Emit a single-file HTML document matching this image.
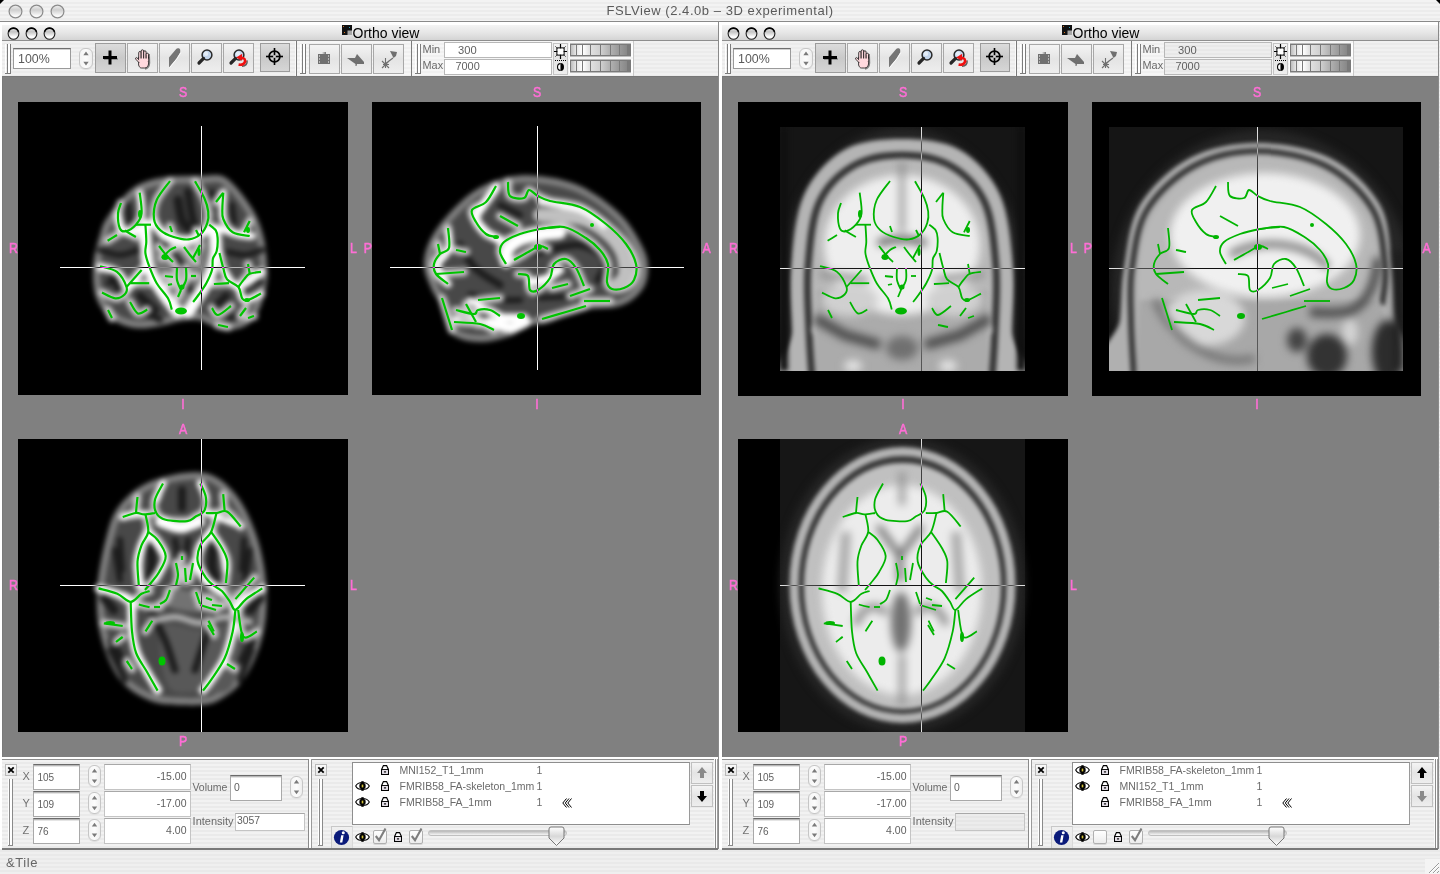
<!DOCTYPE html><html><head><meta charset="utf-8"><style>
*{margin:0;padding:0;box-sizing:border-box}
html,body{width:1440px;height:874px;overflow:hidden}
body{position:relative;font-family:"Liberation Sans",sans-serif;background:repeating-linear-gradient(180deg,#efefef 0 2px,#e9e9e9 2px 4px);}
div,span,svg{position:absolute}
.stripe{background:repeating-linear-gradient(180deg,#f1f1f1 0 2px,#ebebeb 2px 4px)}
.gray{background:#808080}
.blk{background:#000;overflow:hidden}
.lbl{color:#ff73d6;font-size:12px;line-height:12px;}
.t{white-space:nowrap;font-size:11px;line-height:13px;color:#5f5f5f}
.fld{background:#fff;border:1px solid #9a9a9a;border-top-color:#6f6f6f;box-shadow:inset 0 1px 0 #d0d0d0}
.btn{border:1px solid #a8a8a8;background:linear-gradient(#f4f4f4,#e4e4e4 50%,#eeeeee)}
.btnp{border:1px solid #9c9c9c;background:linear-gradient(#dcdcdc,#c9c9c9 50%,#d6d6d6)}
.tl{border-radius:50%;background:radial-gradient(circle at 50% 75%,#ffffff 0,#f2f2f2 30%,#c9c9c9 70%,#9a9a9a 100%);border:1px solid #8b8b8b}
</style></head><body><div style="left:0;top:0;width:1440px;height:21px;background:repeating-linear-gradient(180deg,#f3f3f3 0 2px,#ececec 2px 4px)"></div>
<div style="left:0;top:21px;width:1440px;height:1px;background:#8a8a8a"></div>
<svg style="left:7.5px;top:3.5px;" width="15" height="15" viewBox="0 0 15 15"><defs><linearGradient id="mtl" x1="0" y1="0" x2="0" y2="1"><stop offset="0" stop-color="#f0f0f0"/><stop offset=".38" stop-color="#cfcfcf"/><stop offset=".85" stop-color="#fbfbfb"/><stop offset="1" stop-color="#f2f2f2"/></linearGradient></defs><circle cx="7.5" cy="7.5" r="6.4" fill="url(#mtl)" stroke="#8a8a8a" stroke-width="1.2"/></svg>
<svg style="left:28.5px;top:3.5px;" width="15" height="15" viewBox="0 0 15 15"><defs><linearGradient id="mtl" x1="0" y1="0" x2="0" y2="1"><stop offset="0" stop-color="#f0f0f0"/><stop offset=".38" stop-color="#cfcfcf"/><stop offset=".85" stop-color="#fbfbfb"/><stop offset="1" stop-color="#f2f2f2"/></linearGradient></defs><circle cx="7.5" cy="7.5" r="6.4" fill="url(#mtl)" stroke="#8a8a8a" stroke-width="1.2"/></svg>
<svg style="left:49.5px;top:3.5px;" width="15" height="15" viewBox="0 0 15 15"><defs><linearGradient id="mtl" x1="0" y1="0" x2="0" y2="1"><stop offset="0" stop-color="#f0f0f0"/><stop offset=".38" stop-color="#cfcfcf"/><stop offset=".85" stop-color="#fbfbfb"/><stop offset="1" stop-color="#f2f2f2"/></linearGradient></defs><circle cx="7.5" cy="7.5" r="6.4" fill="url(#mtl)" stroke="#8a8a8a" stroke-width="1.2"/></svg>
<svg style="left:0;top:0" width="5" height="5"><path d="M0 0 H4 L0 4 Z" fill="#000"/></svg>
<svg style="left:1435px;top:0" width="5" height="5"><path d="M5 0 H1 L5 4 Z" fill="#000"/></svg>
<div class="t" style="left:520.0px;width:400px;text-align:center;top:2.50px;font-size:13px;line-height:16px;color:#5a5a5a;font-weight:normal;letter-spacing:0.55px">FSLView (2.4.0b – 3D experimental)</div>
<div class="t" style="left:6px;top:854.50px;font-size:13px;line-height:16px;color:#666;font-weight:normal;letter-spacing:0.6px">&amp;Tile</div>
<svg style="left:1425px;top:859px;" width="15" height="15" viewBox="0 0 15 15"><rect x="0" y="0" width="15" height="15" fill="#f4f4f4"/><path d="M4 14 L14 4 M8 14 L14 8 M12 14 L14 12" stroke="#9a9a9a" stroke-width="1"/><path d="M5 14 L14 5 M9 14 L14 9" stroke="#fff" stroke-width="1"/></svg>
<div style="left:0px;top:22px;width:2px;height:827px;background:#fff"></div>
<div style="left:719px;top:22px;width:3px;height:827px;background:#fff"></div>
<div style="left:2px;top:22px;width:716px;height:3px;background:#fff"></div>
<div style="left:2px;top:25px;width:716px;height:15px;background:linear-gradient(#f4f4f4,#e6e6e6 50%,#d4d4d4)"></div>
<svg style="left:7.0px;top:26.5px;" width="13" height="13" viewBox="0 0 13 13"><defs><linearGradient id="stl" x1="0" y1="0" x2="0" y2="1"><stop offset="0" stop-color="#e8e8e8"/><stop offset=".35" stop-color="#c4c4c4"/><stop offset=".8" stop-color="#ffffff"/><stop offset="1" stop-color="#f4f4f4"/></linearGradient></defs><ellipse cx="6.5" cy="6.5" rx="5.4" ry="5.7" fill="url(#stl)" stroke="#1e1e1e" stroke-width="1.1"/><path d="M1.6 5 A5.2 5.6 0 0 1 11.4 5" fill="none" stroke="#000" stroke-width="1.3"/></svg>
<svg style="left:25.0px;top:26.5px;" width="13" height="13" viewBox="0 0 13 13"><defs><linearGradient id="stl" x1="0" y1="0" x2="0" y2="1"><stop offset="0" stop-color="#e8e8e8"/><stop offset=".35" stop-color="#c4c4c4"/><stop offset=".8" stop-color="#ffffff"/><stop offset="1" stop-color="#f4f4f4"/></linearGradient></defs><ellipse cx="6.5" cy="6.5" rx="5.4" ry="5.7" fill="url(#stl)" stroke="#1e1e1e" stroke-width="1.1"/><path d="M1.6 5 A5.2 5.6 0 0 1 11.4 5" fill="none" stroke="#000" stroke-width="1.3"/></svg>
<svg style="left:43.0px;top:26.5px;" width="13" height="13" viewBox="0 0 13 13"><defs><linearGradient id="stl" x1="0" y1="0" x2="0" y2="1"><stop offset="0" stop-color="#e8e8e8"/><stop offset=".35" stop-color="#c4c4c4"/><stop offset=".8" stop-color="#ffffff"/><stop offset="1" stop-color="#f4f4f4"/></linearGradient></defs><ellipse cx="6.5" cy="6.5" rx="5.4" ry="5.7" fill="url(#stl)" stroke="#1e1e1e" stroke-width="1.1"/><path d="M1.6 5 A5.2 5.6 0 0 1 11.4 5" fill="none" stroke="#000" stroke-width="1.3"/></svg>
<svg style="left:342px;top:25px;" width="10" height="10" viewBox="0 0 10 10"><rect x="0" y="0" width="10" height="10" fill="#111"/><rect x="5.5" y="5.5" width="4.5" height="4.5" fill="#a8a8a8"/><rect x="1" y="1" width="1" height="1" fill="#d07020"/><rect x="7" y="2" width="1" height="1" fill="#2aa0c0"/><rect x="2" y="7" width="1" height="1" fill="#d07020"/></svg>
<div class="t" style="left:352.5px;top:24.95px;font-size:14px;line-height:17px;color:#000;font-weight:normal;">Ortho view</div>
<div style="left:2px;top:40px;width:716px;height:1px;background:#8e8e8e"></div>
<div class="stripe" style="left:2px;top:41px;width:716px;height:35px;"></div>
<div class="gray" style="left:2px;top:76px;width:716px;height:681px;"></div>
<div style="left:2px;top:76px;width:716px;height:1px;background:#777"></div>
<div style="left:2px;top:76px;width:1px;height:681px;background:#7a7a7a"></div>
<div style="left:2px;top:757px;width:716px;height:2px;background:#fff"></div>
<div style="left:2px;top:759px;width:716px;height:1px;background:#8e8e8e"></div>
<div class="stripe" style="left:2px;top:760px;width:716px;height:88px;"></div>
<div style="left:2px;top:848px;width:716px;height:2px;background:#7a7a7a"></div>
<svg style="left:5px;top:44px;" width="7" height="31" viewBox="0 0 7 31"><rect x="0" y="0" width="1" height="30" fill="#fff"/><rect x="2" y="0" width="1" height="30" fill="#7c7c7c"/><rect x="3" y="0" width="2" height="30" fill="#fff"/><rect x="5" y="0" width="1" height="30" fill="#7c7c7c"/><rect x="0" y="29" width="6" height="1" fill="#7c7c7c"/></svg>
<div class="fld" style="left:13px;top:48px;width:58px;height:21px"></div>
<div class="t" style="left:18px;top:51.70px;font-size:12.4px;line-height:15px;color:#5a5a5a;font-weight:normal;">100%</div>
<div style="left:79px;top:48px;width:14px;height:21px;border:1px solid #c6c6c6;border-radius:6px;background:linear-gradient(90deg,#f4f4f4,#fcfcfc 50%,#eeeeee);box-shadow:0 1px 0 #e0e0e0"></div>
<svg style="left:79px;top:48px;" width="14" height="21" viewBox="0 0 14 21"><path d="M4.3 7.140000000000001 L7.0 3.4400000000000004 L9.7 7.140000000000001 Z" fill="#7a7a7a"/><path d="M4.3 13.860000000000001 L7.0 17.560000000000002 L9.7 13.860000000000001 Z" fill="#7a7a7a"/></svg>
<div class="btnp" style="left:95px;top:43px;width:31px;height:30px;"></div>
<svg style="left:95px;top:43px;" width="31" height="30" viewBox="0 0 31 30"><g fill="#000"><rect x="8" y="13" width="14" height="3"/><rect x="13.5" y="7.5" width="3" height="14"/></g><g fill="#000" opacity="0.25"><rect x="9" y="15" width="14" height="2"/></g></svg>
<div class="btn" style="left:127px;top:43px;width:31px;height:30px;"></div>
<svg style="left:127px;top:43px;" width="31" height="30" viewBox="0 0 31 30"><g stroke="#111" stroke-width="0.8" fill="#ffd9de"><path d="M11.6 14 L21.6 14 L21.6 20 C21.6 23 20 25 17.5 25 L14.5 25 C13 25 12.4 24 11.6 22 Z"/><path d="M12.3 20 L8.8 16.2 C8.1 15.3 8.8 14.2 9.9 14.8 L12.6 17.2"/><rect x="11.7" y="8.5" width="2.4" height="9" rx="1.2"/><rect x="14.2" y="6.8" width="2.4" height="10.5" rx="1.2"/><rect x="16.7" y="7.8" width="2.4" height="9.5" rx="1.2"/><rect x="19.2" y="10.2" width="2.3" height="7.5" rx="1.15"/></g><rect x="12.1" y="15.5" width="9.1" height="2.5" fill="#ffd9de"/><path d="M22.3 11 L22.6 20 C22.4 23.5 21 25.5 18 26" fill="none" stroke="#000" stroke-width="1.3" opacity=".45"/></svg>
<div class="btn" style="left:159px;top:43px;width:31px;height:30px;"></div>
<svg style="left:159px;top:43px;" width="31" height="30" viewBox="0 0 31 30"><path d="M10 24.5 L10 14.5 L17 6.2 C18 5 20.6 5 21.2 6.8 L21.2 9.5 L17.5 15.5 Z" fill="#767676"/><path d="M10.6 24.8 L17.9 15.8 L21.8 9.6" fill="none" stroke="#fff" stroke-width="0.9"/></svg>
<div class="btn" style="left:191px;top:43px;width:31px;height:30px;"></div>
<svg style="left:191px;top:43px;" width="31" height="30" viewBox="0 0 31 30"><circle cx="16" cy="12" r="4.9" fill="#c4d6ec" stroke="#2a2a2a" stroke-width="1.5"/><circle cx="15" cy="10.8" r="2.2" fill="#eef4fb" opacity=".8"/><path d="M12.6 15.4 L8 20" stroke="#262626" stroke-width="3.2" stroke-linecap="round"/></svg>
<div class="btn" style="left:223px;top:43px;width:31px;height:30px;"></div>
<svg style="left:223px;top:43px;" width="31" height="30" viewBox="0 0 31 30"><circle cx="16" cy="12" r="4.9" fill="#c4d6ec" stroke="#2a2a2a" stroke-width="1.5"/><circle cx="15" cy="10.8" r="2.2" fill="#eef4fb" opacity=".8"/><path d="M12.6 15.4 L8 20" stroke="#262626" stroke-width="3.2" stroke-linecap="round"/><path d="M19 23.3 C22.5 23 24.6 21 24 17.5" fill="none" stroke="#333" stroke-width="1.6" opacity=".75"/><path d="M17 14.8 C21.5 14.2 23 17 21.6 19.6 C20.6 21.5 18.2 22 15.6 21.6" fill="none" stroke="#f01010" stroke-width="2.6"/><path d="M13.2 14.6 L19.2 10.8 L18.8 17.8 Z" fill="#f01010"/></svg>
<div class="btnp" style="left:260px;top:43px;width:30px;height:29px;"></div>
<svg style="left:260px;top:43px;" width="30" height="29" viewBox="0 0 30 29"><circle cx="14.5" cy="13.5" r="5.4" fill="none" stroke="#000" stroke-width="1.7"/><rect x="13.7" y="5" width="1.6" height="17" fill="#000"/><rect x="6" y="12.7" width="17" height="1.6" fill="#000"/><rect x="13.2" y="12.2" width="2.6" height="2.6" fill="#d6d6d6"/></svg>
<div style="left:295px;top:41px;width:1px;height:35px;background:#fafafa"></div>
<div style="left:296px;top:41px;width:1px;height:35px;background:#7a7a7a"></div>
<div style="left:297px;top:41px;width:114px;height:35px;background:repeating-linear-gradient(180deg,#f6f6f6 0 2px,#f0f0f0 2px 4px)"></div>
<svg style="left:300px;top:44px;" width="7" height="31" viewBox="0 0 7 31"><rect x="0" y="0" width="1" height="30" fill="#fff"/><rect x="2" y="0" width="1" height="30" fill="#7c7c7c"/><rect x="3" y="0" width="2" height="30" fill="#fff"/><rect x="5" y="0" width="1" height="30" fill="#7c7c7c"/><rect x="0" y="29" width="6" height="1" fill="#7c7c7c"/></svg>
<div class="btn" style="left:309px;top:44px;width:31px;height:30px;"></div>
<svg style="left:309px;top:44px;" width="31" height="30" viewBox="0 0 31 30"><path d="M9 10 L21 10 L21 20 L9 20 Z" fill="#6f6f6f"/><path d="M13 9 L17 8 L17 10 Z" fill="#6f6f6f"/><g fill="#fff"><rect x="10" y="11.5" width="1" height="1"/><rect x="10" y="14.5" width="1" height="1"/><rect x="10" y="17.5" width="1" height="1"/><rect x="19" y="11.5" width="1" height="1"/><rect x="19" y="14.5" width="1" height="1"/><rect x="19" y="17.5" width="1" height="1"/></g></svg>
<div class="btn" style="left:341px;top:44px;width:31px;height:30px;"></div>
<svg style="left:341px;top:44px;" width="31" height="30" viewBox="0 0 31 30"><path d="M6 14 L14 14 L16 10 L23 18 L23 20 L16 20 L15.5 22 L14.5 22 L14.5 20 Z" fill="#6f6f6f"/></svg>
<div class="btn" style="left:373px;top:44px;width:31px;height:30px;"></div>
<svg style="left:373px;top:44px;" width="31" height="30" viewBox="0 0 31 30"><path d="M9 24 L16 17 M9 17 L16 24 M12.5 14 L12.5 24 M10 20.5 L16 20.5 M12 20 L20 14" stroke="#6f6f6f" stroke-width="1.1"/><path d="M17 7 L24 8 L23 12 L20.5 14 L19 11 Z" fill="#6f6f6f"/></svg>
<div style="left:411px;top:41px;width:1px;height:35px;background:#7a7a7a"></div>
<div style="left:412px;top:41px;width:221px;height:35px;background:repeating-linear-gradient(180deg,#f6f6f6 0 2px,#f0f0f0 2px 4px)"></div>
<div style="left:633px;top:41px;width:1px;height:35px;background:#c8c8c8"></div>
<svg style="left:415px;top:44px;" width="7" height="31" viewBox="0 0 7 31"><rect x="0" y="0" width="1" height="30" fill="#fff"/><rect x="2" y="0" width="1" height="30" fill="#7c7c7c"/><rect x="3" y="0" width="2" height="30" fill="#fff"/><rect x="5" y="0" width="1" height="30" fill="#7c7c7c"/><rect x="0" y="29" width="6" height="1" fill="#7c7c7c"/></svg>
<div class="t" style="left:422.5px;top:42.69px;font-size:11px;line-height:13px;color:#6a6a6a;font-weight:normal;">Min</div>
<div class="t" style="left:422.5px;top:59.22px;font-size:10.9px;line-height:13px;color:#6a6a6a;font-weight:normal;">Max</div>
<div class="fld" style="left:444px;top:42px;width:108px;height:16px;border-color:#b8b8b8;box-shadow:none;"></div>
<div class="fld" style="left:444px;top:59px;width:108px;height:16px;border-color:#b8b8b8;box-shadow:none;"></div>
<div class="t" style="left:458px;top:43.62px;font-size:11.2px;line-height:13px;color:#5f5f5f;font-weight:normal;">300</div>
<div class="t" style="left:455.5px;top:60.22px;font-size:10.9px;line-height:13px;color:#5f5f5f;font-weight:normal;">7000</div>
<div class="btn" style="left:553px;top:43px;width:15px;height:32px;border-color:#c4c4c4"></div>
<svg style="left:553px;top:43px;" width="15" height="32" viewBox="0 0 15 32"><rect x="4" y="5" width="7" height="7" fill="none" stroke="#000" stroke-width="1.2"/><path d="M7.5 1 V16 M1 8.5 H14" stroke="#000" stroke-width="1.2"/><rect x="4.6" y="5.6" width="5.8" height="5.8" fill="#fff"/><path d="M2.5 3.5 l1 1 M12.5 3.5 l-1 1 M2.5 13.5 l1 -1 M12.5 13.5 l-1 -1" stroke="#000" stroke-width="1"/><path d="M2 17.5 H13" stroke="#000" stroke-width="1" stroke-dasharray="1 1"/><path d="M7.5 20 A3.5 4 0 0 0 7.5 28 Z" fill="#000"/><path d="M7.5 20 A3.5 4 0 0 1 7.5 28 Z" fill="#000"/><path d="M7.3 21.2 A2.2 2.8 0 0 0 7.3 26.8 Z" fill="#fff"/></svg>
<svg style="left:569px;top:43px;" width="64" height="14" viewBox="0 0 64 14"><defs><linearGradient id="sg0" x1="0" x2="1"><stop offset="0" stop-color="#bdbdbd"/><stop offset="1" stop-color="#e8e8e8"/></linearGradient><linearGradient id="sg1" x1="0" x2="1"><stop offset="0" stop-color="#e8e8e8"/><stop offset="1" stop-color="#ffffff"/></linearGradient><linearGradient id="sg2" x1="0" x2="1"><stop offset="0" stop-color="#ffffff"/><stop offset="1" stop-color="#e0e0e0"/></linearGradient><linearGradient id="sg3" x1="0" x2="1"><stop offset="0" stop-color="#e0e0e0"/><stop offset="1" stop-color="#cfcfcf"/></linearGradient><linearGradient id="sg4" x1="0" x2="1"><stop offset="0" stop-color="#cfcfcf"/><stop offset="1" stop-color="#b0b0b0"/></linearGradient><linearGradient id="sg5" x1="0" x2="1"><stop offset="0" stop-color="#b0b0b0"/><stop offset="1" stop-color="#999"/></linearGradient><linearGradient id="sg6" x1="0" x2="1"><stop offset="0" stop-color="#999"/><stop offset="1" stop-color="#888"/></linearGradient></defs><rect x="0" y="0" width="64" height="14" fill="#fff"/><rect x="1" y="0.5" width="61" height="13" fill="#7a7a7a"/><rect x="2" y="2" width="5" height="10" fill="url(#sg0)"/><rect x="8" y="2" width="5" height="10" fill="url(#sg1)"/><rect x="14" y="2" width="7" height="10" fill="url(#sg2)"/><rect x="22" y="2" width="9" height="10" fill="url(#sg3)"/><rect x="32" y="2" width="9" height="10" fill="url(#sg4)"/><rect x="42" y="2" width="8" height="10" fill="url(#sg5)"/><rect x="51" y="2" width="7" height="10" fill="url(#sg6)"/><rect x="1" y="12" width="61" height="1" fill="#7a7a7a"/></svg>
<svg style="left:569px;top:59px;" width="64" height="14" viewBox="0 0 64 14"><defs><linearGradient id="sg0" x1="0" x2="1"><stop offset="0" stop-color="#bdbdbd"/><stop offset="1" stop-color="#e8e8e8"/></linearGradient><linearGradient id="sg1" x1="0" x2="1"><stop offset="0" stop-color="#e8e8e8"/><stop offset="1" stop-color="#ffffff"/></linearGradient><linearGradient id="sg2" x1="0" x2="1"><stop offset="0" stop-color="#ffffff"/><stop offset="1" stop-color="#e0e0e0"/></linearGradient><linearGradient id="sg3" x1="0" x2="1"><stop offset="0" stop-color="#e0e0e0"/><stop offset="1" stop-color="#cfcfcf"/></linearGradient><linearGradient id="sg4" x1="0" x2="1"><stop offset="0" stop-color="#cfcfcf"/><stop offset="1" stop-color="#b0b0b0"/></linearGradient><linearGradient id="sg5" x1="0" x2="1"><stop offset="0" stop-color="#b0b0b0"/><stop offset="1" stop-color="#999"/></linearGradient><linearGradient id="sg6" x1="0" x2="1"><stop offset="0" stop-color="#999"/><stop offset="1" stop-color="#888"/></linearGradient></defs><rect x="0" y="0" width="64" height="14" fill="#fff"/><rect x="1" y="0.5" width="61" height="13" fill="#7a7a7a"/><rect x="2" y="2" width="5" height="10" fill="url(#sg0)"/><rect x="8" y="2" width="5" height="10" fill="url(#sg1)"/><rect x="14" y="2" width="7" height="10" fill="url(#sg2)"/><rect x="22" y="2" width="9" height="10" fill="url(#sg3)"/><rect x="32" y="2" width="9" height="10" fill="url(#sg4)"/><rect x="42" y="2" width="8" height="10" fill="url(#sg5)"/><rect x="51" y="2" width="7" height="10" fill="url(#sg6)"/><rect x="1" y="12" width="61" height="1" fill="#7a7a7a"/></svg>
<div style="left:2px;top:760px;width:306px;height:88px;background:repeating-linear-gradient(180deg,#f2f2f2 0 2px,#eaeaea 2px 4px)"></div>
<div style="left:308px;top:759px;width:1px;height:89px;background:#8a8a8a"></div>
<div style="left:309px;top:759px;width:2px;height:89px;background:#fff"></div>
<div style="left:311px;top:759px;width:1px;height:89px;background:#9a9a9a"></div>
<div style="left:5px;top:764px;width:12px;height:12px;border:1px solid #b8b8b8;background:linear-gradient(#fafafa,#e6e6e6)"></div>
<svg style="left:5px;top:764px;" width="12" height="12" viewBox="0 0 12 12"><path d="M3.3 3.3 L8.7 8.7 M8.7 3.3 L3.3 8.7" stroke="#000" stroke-width="1.8"/></svg>
<svg style="left:8px;top:779px;" width="7" height="68" viewBox="0 0 7 68"><rect x="0" y="0" width="1" height="67" fill="#fff"/><rect x="1" y="0" width="1" height="67" fill="#8a8a8a"/><rect x="2" y="0" width="2" height="67" fill="#fff"/><rect x="4" y="0" width="1" height="67" fill="#8a8a8a"/><rect x="0" y="66" width="5" height="1" fill="#8a8a8a"/></svg>
<div class="t" style="left:22.5px;top:769.69px;font-size:11px;line-height:13px;color:#707070;font-weight:normal;">X</div>
<div style="left:33px;top:764px;width:47px;height:26px;background:#fff;border:1px solid #a9a9a9;border-top-color:#6a6a6a;box-shadow:inset 0 1px 0 #b8b8b8, inset 0 2px 0 #e4e4e4"></div>
<div class="t" style="left:37.5px;top:771.53px;font-size:10px;line-height:12px;color:#5f5f5f;font-weight:normal;">105</div>
<div style="left:88px;top:765px;width:13px;height:22px;border:1px solid #c6c6c6;border-radius:6px;background:linear-gradient(90deg,#f4f4f4,#fcfcfc 50%,#eeeeee);box-shadow:0 1px 0 #e0e0e0"></div>
<svg style="left:88px;top:765px;" width="13" height="22" viewBox="0 0 13 22"><path d="M3.8 7.48 L6.5 3.7800000000000002 L9.2 7.48 Z" fill="#7a7a7a"/><path d="M3.8 14.520000000000001 L6.5 18.220000000000002 L9.2 14.520000000000001 Z" fill="#7a7a7a"/></svg>
<div style="left:104px;top:764px;width:87px;height:26px;background:#fff;border:1px solid #c4c4c4;border-top-color:#a8a8a8"></div>
<div class="t" style="left:106.5px;width:80px;text-align:right;top:769.86px;font-size:10.5px;line-height:13px;color:#5f5f5f;font-weight:normal;">-15.00</div>
<div class="t" style="left:22.5px;top:796.69px;font-size:11px;line-height:13px;color:#707070;font-weight:normal;">Y</div>
<div style="left:33px;top:791px;width:47px;height:26px;background:#fff;border:1px solid #a9a9a9;border-top-color:#6a6a6a;box-shadow:inset 0 1px 0 #b8b8b8, inset 0 2px 0 #e4e4e4"></div>
<div class="t" style="left:37.5px;top:798.53px;font-size:10px;line-height:12px;color:#5f5f5f;font-weight:normal;">109</div>
<div style="left:88px;top:792px;width:13px;height:22px;border:1px solid #c6c6c6;border-radius:6px;background:linear-gradient(90deg,#f4f4f4,#fcfcfc 50%,#eeeeee);box-shadow:0 1px 0 #e0e0e0"></div>
<svg style="left:88px;top:792px;" width="13" height="22" viewBox="0 0 13 22"><path d="M3.8 7.48 L6.5 3.7800000000000002 L9.2 7.48 Z" fill="#7a7a7a"/><path d="M3.8 14.520000000000001 L6.5 18.220000000000002 L9.2 14.520000000000001 Z" fill="#7a7a7a"/></svg>
<div style="left:104px;top:791px;width:87px;height:26px;background:#fff;border:1px solid #c4c4c4;border-top-color:#a8a8a8"></div>
<div class="t" style="left:106.5px;width:80px;text-align:right;top:796.86px;font-size:10.5px;line-height:13px;color:#5f5f5f;font-weight:normal;">-17.00</div>
<div class="t" style="left:22.5px;top:823.69px;font-size:11px;line-height:13px;color:#707070;font-weight:normal;">Z</div>
<div style="left:33px;top:818px;width:47px;height:26px;background:#fff;border:1px solid #a9a9a9;border-top-color:#6a6a6a;box-shadow:inset 0 1px 0 #b8b8b8, inset 0 2px 0 #e4e4e4"></div>
<div class="t" style="left:37.5px;top:825.53px;font-size:10px;line-height:12px;color:#5f5f5f;font-weight:normal;">76</div>
<div style="left:88px;top:819px;width:13px;height:22px;border:1px solid #c6c6c6;border-radius:6px;background:linear-gradient(90deg,#f4f4f4,#fcfcfc 50%,#eeeeee);box-shadow:0 1px 0 #e0e0e0"></div>
<svg style="left:88px;top:819px;" width="13" height="22" viewBox="0 0 13 22"><path d="M3.8 7.48 L6.5 3.7800000000000002 L9.2 7.48 Z" fill="#7a7a7a"/><path d="M3.8 14.520000000000001 L6.5 18.220000000000002 L9.2 14.520000000000001 Z" fill="#7a7a7a"/></svg>
<div style="left:104px;top:818px;width:87px;height:26px;background:#fff;border:1px solid #c4c4c4;border-top-color:#a8a8a8"></div>
<div class="t" style="left:106.5px;width:80px;text-align:right;top:823.86px;font-size:10.5px;line-height:13px;color:#5f5f5f;font-weight:normal;">4.00</div>
<div class="t" style="left:192.4px;top:780.86px;font-size:10.5px;line-height:13px;color:#6a6a6a;font-weight:normal;">Volume</div>
<div style="left:230px;top:775px;width:52px;height:26px;background:#fff;border:1px solid #a9a9a9;border-top-color:#6a6a6a;box-shadow:inset 0 1px 0 #b8b8b8, inset 0 2px 0 #e4e4e4"></div>
<div class="t" style="left:234px;top:782.40px;font-size:10.4px;line-height:12px;color:#5f5f5f;font-weight:normal;">0</div>
<div style="left:290px;top:776px;width:13px;height:22px;border:1px solid #c6c6c6;border-radius:6px;background:linear-gradient(90deg,#f4f4f4,#fcfcfc 50%,#eeeeee);box-shadow:0 1px 0 #e0e0e0"></div>
<svg style="left:290px;top:776px;" width="13" height="22" viewBox="0 0 13 22"><path d="M3.8 7.48 L6.5 3.7800000000000002 L9.2 7.48 Z" fill="#7a7a7a"/><path d="M3.8 14.520000000000001 L6.5 18.220000000000002 L9.2 14.520000000000001 Z" fill="#7a7a7a"/></svg>
<div class="t" style="left:192.6px;top:814.69px;font-size:11px;line-height:13px;color:#6a6a6a;font-weight:normal;">Intensity</div>
<div style="left:235px;top:813px;width:70px;height:18px;background:#fff;border:1px solid #c4c4c4;border-top-color:#a8a8a8"></div>
<div class="t" style="left:237px;top:815.40px;font-size:10.4px;line-height:12px;color:#5f5f5f;font-weight:normal;">3057</div>
<div style="left:312px;top:760px;width:402px;height:88px;background:repeating-linear-gradient(180deg,#f2f2f2 0 2px,#eaeaea 2px 4px)"></div>
<div style="left:714px;top:759px;width:1px;height:89px;background:#fafafa"></div>
<div style="left:715px;top:759px;width:1px;height:89px;background:#8c8c8c"></div>
<div style="left:716px;top:759px;width:1px;height:89px;background:#fff"></div>
<div style="left:717px;top:759px;width:1px;height:89px;background:#a0a0a0"></div>
<div style="left:315px;top:764px;width:12px;height:12px;border:1px solid #b8b8b8;background:linear-gradient(#fafafa,#e6e6e6)"></div>
<svg style="left:315px;top:764px;" width="12" height="12" viewBox="0 0 12 12"><path d="M3.3 3.3 L8.7 8.7 M8.7 3.3 L3.3 8.7" stroke="#000" stroke-width="1.8"/></svg>
<svg style="left:318px;top:779px;" width="7" height="68" viewBox="0 0 7 68"><rect x="0" y="0" width="1" height="67" fill="#fff"/><rect x="1" y="0" width="1" height="67" fill="#8a8a8a"/><rect x="2" y="0" width="2" height="67" fill="#fff"/><rect x="4" y="0" width="1" height="67" fill="#8a8a8a"/><rect x="0" y="66" width="5" height="1" fill="#8a8a8a"/></svg>
<div style="left:352px;top:762px;width:338px;height:63px;background:#fff;border:1px solid #8e8e8e;border-right-color:#9a9a9a"></div>
<svg style="left:381px;top:765px;" width="8" height="10" viewBox="0 0 8 10"><path d="M0.6 4.5 L2.4 0.6 L5.6 0.6 L7.4 4.5 L7.4 9.4 L0.6 9.4 Z" fill="#fff" stroke="#000" stroke-width="1.2" stroke-linejoin="miter"/><path d="M0.6 4.6 H7.4" stroke="#000" stroke-width="1.1"/><rect x="1.2" y="5.2" width="5.6" height="3.6" fill="#eae4ee"/><rect x="2.9" y="6.3" width="2.2" height="1.2" fill="#000"/></svg>
<div class="t" style="left:399.5px;top:763.86px;font-size:10.5px;line-height:13px;color:#6a6a6a;font-weight:normal;">MNI152_T1_1mm</div>
<div class="t" style="left:536.5px;top:763.86px;font-size:10.5px;line-height:13px;color:#6a6a6a;font-weight:normal;">1</div>
<svg style="left:355px;top:781px;" width="15" height="10" viewBox="0 0 15 10"><path d="M0.7 5 C3 0.3 12 0.3 14.3 5 C12 9.7 3 9.7 0.7 5 Z" fill="#fff" stroke="#000" stroke-width="1.1"/><circle cx="7.5" cy="5" r="3.2" fill="#000"/><rect x="6.7" y="3.6" width="1.6" height="2.8" fill="#d4c23a"/><rect x="6.3" y="0.2" width="2.4" height="1.2" fill="#000"/><rect x="6.3" y="8.6" width="2.4" height="1.2" fill="#000"/></svg>
<svg style="left:381px;top:781px;" width="8" height="10" viewBox="0 0 8 10"><path d="M0.6 4.5 L2.4 0.6 L5.6 0.6 L7.4 4.5 L7.4 9.4 L0.6 9.4 Z" fill="#fff" stroke="#000" stroke-width="1.2" stroke-linejoin="miter"/><path d="M0.6 4.6 H7.4" stroke="#000" stroke-width="1.1"/><rect x="1.2" y="5.2" width="5.6" height="3.6" fill="#eae4ee"/><rect x="2.9" y="6.3" width="2.2" height="1.2" fill="#000"/></svg>
<div class="t" style="left:399.5px;top:779.86px;font-size:10.5px;line-height:13px;color:#6a6a6a;font-weight:normal;">FMRIB58_FA-skeleton_1mm</div>
<div class="t" style="left:536.5px;top:779.86px;font-size:10.5px;line-height:13px;color:#6a6a6a;font-weight:normal;">1</div>
<svg style="left:355px;top:797px;" width="15" height="10" viewBox="0 0 15 10"><path d="M0.7 5 C3 0.3 12 0.3 14.3 5 C12 9.7 3 9.7 0.7 5 Z" fill="#fff" stroke="#000" stroke-width="1.1"/><circle cx="7.5" cy="5" r="3.2" fill="#000"/><rect x="6.7" y="3.6" width="1.6" height="2.8" fill="#d4c23a"/><rect x="6.3" y="0.2" width="2.4" height="1.2" fill="#000"/><rect x="6.3" y="8.6" width="2.4" height="1.2" fill="#000"/></svg>
<svg style="left:381px;top:797px;" width="8" height="10" viewBox="0 0 8 10"><path d="M0.6 4.5 L2.4 0.6 L5.6 0.6 L7.4 4.5 L7.4 9.4 L0.6 9.4 Z" fill="#fff" stroke="#000" stroke-width="1.2" stroke-linejoin="miter"/><path d="M0.6 4.6 H7.4" stroke="#000" stroke-width="1.1"/><rect x="1.2" y="5.2" width="5.6" height="3.6" fill="#eae4ee"/><rect x="2.9" y="6.3" width="2.2" height="1.2" fill="#000"/></svg>
<div class="t" style="left:399.5px;top:795.86px;font-size:10.5px;line-height:13px;color:#6a6a6a;font-weight:normal;">FMRIB58_FA_1mm</div>
<div class="t" style="left:536.5px;top:795.86px;font-size:10.5px;line-height:13px;color:#6a6a6a;font-weight:normal;">1</div>
<svg style="left:562px;top:798px;" width="10" height="10" viewBox="0 0 10 10"><path d="M4.5 0.5 L0.8 5 L4.5 9.5 M7 0.5 L3.3 5 L7 9.5 M9.5 0.5 L5.8 5 L9.5 9.5" fill="none" stroke="#000" stroke-width="1"/></svg>
<div class="btn" style="left:691px;top:762px;width:22px;height:22px;border-color:#c0c0c0"></div>
<svg style="left:691px;top:762px;" width="22" height="22" viewBox="0 0 22 22"><path d="M11 5 L16 11 L13 11 L13 16 L9 16 L9 11 L6 11 Z" fill="#8a8a8a"/></svg>
<div class="btn" style="left:691px;top:785px;width:22px;height:22px;border-color:#c0c0c0"></div>
<svg style="left:691px;top:785px;" width="22" height="22" viewBox="0 0 22 22"><path d="M11 17 L16 11 L13 11 L13 6 L9 6 L9 11 L6 11 Z" fill="#000"/></svg>
<div style="left:331px;top:826px;width:22px;height:22px;border:1px solid #c8c8c8;border-bottom:none;border-right-color:#d8d8d8;background:linear-gradient(#f0f0f0,#e4e4e4)"></div>
<svg style="left:331px;top:826px;" width="22" height="22" viewBox="0 0 22 22"><circle cx="10.5" cy="11.5" r="7.6" fill="#0a1a7a"/><path d="M10.2 9.2 L12.6 9.2 L11.3 16.5 L8.9 16.5 Z" fill="#fff"/><circle cx="12.3" cy="6.8" r="1.5" fill="#fff"/></svg>
<svg style="left:355px;top:832px;" width="15" height="10" viewBox="0 0 15 10"><path d="M0.7 5 C3 0.3 12 0.3 14.3 5 C12 9.7 3 9.7 0.7 5 Z" fill="#fff" stroke="#000" stroke-width="1.1"/><circle cx="7.5" cy="5" r="3.2" fill="#000"/><rect x="6.7" y="3.6" width="1.6" height="2.8" fill="#d4c23a"/><rect x="6.3" y="0.2" width="2.4" height="1.2" fill="#000"/><rect x="6.3" y="8.6" width="2.4" height="1.2" fill="#000"/></svg>
<div style="left:373px;top:830px;width:14px;height:14px;border:1px solid #b0b0b0;border-radius:2px;background:linear-gradient(#ffffff,#ececec);box-shadow:0 1px 0 #d8d8d8"></div>
<svg style="left:373px;top:828px;" width="14" height="14" viewBox="0 0 14 14"><path d="M2.8 8 L6 12.2 L12.5 0.5" fill="none" stroke="#7e7e7e" stroke-width="2.1"/></svg>
<svg style="left:394px;top:832px;" width="8" height="10" viewBox="0 0 8 10"><path d="M0.6 4.5 L2.4 0.6 L5.6 0.6 L7.4 4.5 L7.4 9.4 L0.6 9.4 Z" fill="#fff" stroke="#000" stroke-width="1.2" stroke-linejoin="miter"/><path d="M0.6 4.6 H7.4" stroke="#000" stroke-width="1.1"/><rect x="1.2" y="5.2" width="5.6" height="3.6" fill="#eae4ee"/><rect x="2.9" y="6.3" width="2.2" height="1.2" fill="#000"/></svg>
<div style="left:409px;top:830px;width:14px;height:14px;border:1px solid #b0b0b0;border-radius:2px;background:linear-gradient(#ffffff,#ececec);box-shadow:0 1px 0 #d8d8d8"></div>
<svg style="left:409px;top:828px;" width="14" height="14" viewBox="0 0 14 14"><path d="M2.8 8 L6 12.2 L12.5 0.5" fill="none" stroke="#7e7e7e" stroke-width="2.1"/></svg>
<div style="left:428px;top:830px;width:139px;height:6px;border-radius:3px;background:linear-gradient(#b8b8b8,#dedede 60%,#f4f4f4);border:1px solid #c0c0c0"></div>
<svg style="left:547px;top:826px;" width="20" height="21" viewBox="0 0 20 21"><defs><linearGradient id="thg" x1="0" y1="0" x2="0" y2="1"><stop offset="0" stop-color="#ffffff"/><stop offset=".5" stop-color="#d8d8d8"/><stop offset="1" stop-color="#ffffff"/></linearGradient></defs><path d="M2 3 Q2 1 4 1 L15 1 Q17 1 17 3 L17 12 L9.5 19.5 L2 12 Z" fill="url(#thg)" stroke="#777" stroke-width="1"/></svg>
<div style="left:718px;top:22px;width:1px;height:827px;background:#8a8a8a"></div>
<div style="left:722px;top:22px;width:716px;height:3px;background:#fff"></div>
<div style="left:722px;top:25px;width:716px;height:15px;background:linear-gradient(#f4f4f4,#e6e6e6 50%,#d4d4d4)"></div>
<svg style="left:727.0px;top:26.5px;" width="13" height="13" viewBox="0 0 13 13"><defs><linearGradient id="stl" x1="0" y1="0" x2="0" y2="1"><stop offset="0" stop-color="#e8e8e8"/><stop offset=".35" stop-color="#c4c4c4"/><stop offset=".8" stop-color="#ffffff"/><stop offset="1" stop-color="#f4f4f4"/></linearGradient></defs><ellipse cx="6.5" cy="6.5" rx="5.4" ry="5.7" fill="url(#stl)" stroke="#1e1e1e" stroke-width="1.1"/><path d="M1.6 5 A5.2 5.6 0 0 1 11.4 5" fill="none" stroke="#000" stroke-width="1.3"/></svg>
<svg style="left:745.0px;top:26.5px;" width="13" height="13" viewBox="0 0 13 13"><defs><linearGradient id="stl" x1="0" y1="0" x2="0" y2="1"><stop offset="0" stop-color="#e8e8e8"/><stop offset=".35" stop-color="#c4c4c4"/><stop offset=".8" stop-color="#ffffff"/><stop offset="1" stop-color="#f4f4f4"/></linearGradient></defs><ellipse cx="6.5" cy="6.5" rx="5.4" ry="5.7" fill="url(#stl)" stroke="#1e1e1e" stroke-width="1.1"/><path d="M1.6 5 A5.2 5.6 0 0 1 11.4 5" fill="none" stroke="#000" stroke-width="1.3"/></svg>
<svg style="left:763.0px;top:26.5px;" width="13" height="13" viewBox="0 0 13 13"><defs><linearGradient id="stl" x1="0" y1="0" x2="0" y2="1"><stop offset="0" stop-color="#e8e8e8"/><stop offset=".35" stop-color="#c4c4c4"/><stop offset=".8" stop-color="#ffffff"/><stop offset="1" stop-color="#f4f4f4"/></linearGradient></defs><ellipse cx="6.5" cy="6.5" rx="5.4" ry="5.7" fill="url(#stl)" stroke="#1e1e1e" stroke-width="1.1"/><path d="M1.6 5 A5.2 5.6 0 0 1 11.4 5" fill="none" stroke="#000" stroke-width="1.3"/></svg>
<svg style="left:1062px;top:25px;" width="10" height="10" viewBox="0 0 10 10"><rect x="0" y="0" width="10" height="10" fill="#111"/><rect x="5.5" y="5.5" width="4.5" height="4.5" fill="#a8a8a8"/><rect x="1" y="1" width="1" height="1" fill="#d07020"/><rect x="7" y="2" width="1" height="1" fill="#2aa0c0"/><rect x="2" y="7" width="1" height="1" fill="#d07020"/></svg>
<div class="t" style="left:1072.5px;top:24.95px;font-size:14px;line-height:17px;color:#000;font-weight:normal;">Ortho view</div>
<div style="left:722px;top:40px;width:716px;height:1px;background:#8e8e8e"></div>
<div class="stripe" style="left:722px;top:41px;width:716px;height:35px;"></div>
<div class="gray" style="left:722px;top:76px;width:716px;height:681px;"></div>
<div style="left:722px;top:76px;width:716px;height:1px;background:#777"></div>
<div style="left:722px;top:76px;width:1px;height:681px;background:#7a7a7a"></div>
<div style="left:722px;top:757px;width:716px;height:2px;background:#fff"></div>
<div style="left:722px;top:759px;width:716px;height:1px;background:#8e8e8e"></div>
<div class="stripe" style="left:722px;top:760px;width:716px;height:88px;"></div>
<div style="left:722px;top:848px;width:716px;height:2px;background:#7a7a7a"></div>
<svg style="left:725px;top:44px;" width="7" height="31" viewBox="0 0 7 31"><rect x="0" y="0" width="1" height="30" fill="#fff"/><rect x="2" y="0" width="1" height="30" fill="#7c7c7c"/><rect x="3" y="0" width="2" height="30" fill="#fff"/><rect x="5" y="0" width="1" height="30" fill="#7c7c7c"/><rect x="0" y="29" width="6" height="1" fill="#7c7c7c"/></svg>
<div class="fld" style="left:733px;top:48px;width:58px;height:21px"></div>
<div class="t" style="left:738px;top:51.70px;font-size:12.4px;line-height:15px;color:#5a5a5a;font-weight:normal;">100%</div>
<div style="left:799px;top:48px;width:14px;height:21px;border:1px solid #c6c6c6;border-radius:6px;background:linear-gradient(90deg,#f4f4f4,#fcfcfc 50%,#eeeeee);box-shadow:0 1px 0 #e0e0e0"></div>
<svg style="left:799px;top:48px;" width="14" height="21" viewBox="0 0 14 21"><path d="M4.3 7.140000000000001 L7.0 3.4400000000000004 L9.7 7.140000000000001 Z" fill="#7a7a7a"/><path d="M4.3 13.860000000000001 L7.0 17.560000000000002 L9.7 13.860000000000001 Z" fill="#7a7a7a"/></svg>
<div class="btnp" style="left:815px;top:43px;width:31px;height:30px;"></div>
<svg style="left:815px;top:43px;" width="31" height="30" viewBox="0 0 31 30"><g fill="#000"><rect x="8" y="13" width="14" height="3"/><rect x="13.5" y="7.5" width="3" height="14"/></g><g fill="#000" opacity="0.25"><rect x="9" y="15" width="14" height="2"/></g></svg>
<div class="btn" style="left:847px;top:43px;width:31px;height:30px;"></div>
<svg style="left:847px;top:43px;" width="31" height="30" viewBox="0 0 31 30"><g stroke="#111" stroke-width="0.8" fill="#ffd9de"><path d="M11.6 14 L21.6 14 L21.6 20 C21.6 23 20 25 17.5 25 L14.5 25 C13 25 12.4 24 11.6 22 Z"/><path d="M12.3 20 L8.8 16.2 C8.1 15.3 8.8 14.2 9.9 14.8 L12.6 17.2"/><rect x="11.7" y="8.5" width="2.4" height="9" rx="1.2"/><rect x="14.2" y="6.8" width="2.4" height="10.5" rx="1.2"/><rect x="16.7" y="7.8" width="2.4" height="9.5" rx="1.2"/><rect x="19.2" y="10.2" width="2.3" height="7.5" rx="1.15"/></g><rect x="12.1" y="15.5" width="9.1" height="2.5" fill="#ffd9de"/><path d="M22.3 11 L22.6 20 C22.4 23.5 21 25.5 18 26" fill="none" stroke="#000" stroke-width="1.3" opacity=".45"/></svg>
<div class="btn" style="left:879px;top:43px;width:31px;height:30px;"></div>
<svg style="left:879px;top:43px;" width="31" height="30" viewBox="0 0 31 30"><path d="M10 24.5 L10 14.5 L17 6.2 C18 5 20.6 5 21.2 6.8 L21.2 9.5 L17.5 15.5 Z" fill="#767676"/><path d="M10.6 24.8 L17.9 15.8 L21.8 9.6" fill="none" stroke="#fff" stroke-width="0.9"/></svg>
<div class="btn" style="left:911px;top:43px;width:31px;height:30px;"></div>
<svg style="left:911px;top:43px;" width="31" height="30" viewBox="0 0 31 30"><circle cx="16" cy="12" r="4.9" fill="#c4d6ec" stroke="#2a2a2a" stroke-width="1.5"/><circle cx="15" cy="10.8" r="2.2" fill="#eef4fb" opacity=".8"/><path d="M12.6 15.4 L8 20" stroke="#262626" stroke-width="3.2" stroke-linecap="round"/></svg>
<div class="btn" style="left:943px;top:43px;width:31px;height:30px;"></div>
<svg style="left:943px;top:43px;" width="31" height="30" viewBox="0 0 31 30"><circle cx="16" cy="12" r="4.9" fill="#c4d6ec" stroke="#2a2a2a" stroke-width="1.5"/><circle cx="15" cy="10.8" r="2.2" fill="#eef4fb" opacity=".8"/><path d="M12.6 15.4 L8 20" stroke="#262626" stroke-width="3.2" stroke-linecap="round"/><path d="M19 23.3 C22.5 23 24.6 21 24 17.5" fill="none" stroke="#333" stroke-width="1.6" opacity=".75"/><path d="M17 14.8 C21.5 14.2 23 17 21.6 19.6 C20.6 21.5 18.2 22 15.6 21.6" fill="none" stroke="#f01010" stroke-width="2.6"/><path d="M13.2 14.6 L19.2 10.8 L18.8 17.8 Z" fill="#f01010"/></svg>
<div class="btnp" style="left:980px;top:43px;width:30px;height:29px;"></div>
<svg style="left:980px;top:43px;" width="30" height="29" viewBox="0 0 30 29"><circle cx="14.5" cy="13.5" r="5.4" fill="none" stroke="#000" stroke-width="1.7"/><rect x="13.7" y="5" width="1.6" height="17" fill="#000"/><rect x="6" y="12.7" width="17" height="1.6" fill="#000"/><rect x="13.2" y="12.2" width="2.6" height="2.6" fill="#d6d6d6"/></svg>
<div style="left:1015px;top:41px;width:1px;height:35px;background:#fafafa"></div>
<div style="left:1016px;top:41px;width:1px;height:35px;background:#7a7a7a"></div>
<div style="left:1017px;top:41px;width:114px;height:35px;background:repeating-linear-gradient(180deg,#f6f6f6 0 2px,#f0f0f0 2px 4px)"></div>
<svg style="left:1020px;top:44px;" width="7" height="31" viewBox="0 0 7 31"><rect x="0" y="0" width="1" height="30" fill="#fff"/><rect x="2" y="0" width="1" height="30" fill="#7c7c7c"/><rect x="3" y="0" width="2" height="30" fill="#fff"/><rect x="5" y="0" width="1" height="30" fill="#7c7c7c"/><rect x="0" y="29" width="6" height="1" fill="#7c7c7c"/></svg>
<div class="btn" style="left:1029px;top:44px;width:31px;height:30px;"></div>
<svg style="left:1029px;top:44px;" width="31" height="30" viewBox="0 0 31 30"><path d="M9 10 L21 10 L21 20 L9 20 Z" fill="#6f6f6f"/><path d="M13 9 L17 8 L17 10 Z" fill="#6f6f6f"/><g fill="#fff"><rect x="10" y="11.5" width="1" height="1"/><rect x="10" y="14.5" width="1" height="1"/><rect x="10" y="17.5" width="1" height="1"/><rect x="19" y="11.5" width="1" height="1"/><rect x="19" y="14.5" width="1" height="1"/><rect x="19" y="17.5" width="1" height="1"/></g></svg>
<div class="btn" style="left:1061px;top:44px;width:31px;height:30px;"></div>
<svg style="left:1061px;top:44px;" width="31" height="30" viewBox="0 0 31 30"><path d="M6 14 L14 14 L16 10 L23 18 L23 20 L16 20 L15.5 22 L14.5 22 L14.5 20 Z" fill="#6f6f6f"/></svg>
<div class="btn" style="left:1093px;top:44px;width:31px;height:30px;"></div>
<svg style="left:1093px;top:44px;" width="31" height="30" viewBox="0 0 31 30"><path d="M9 24 L16 17 M9 17 L16 24 M12.5 14 L12.5 24 M10 20.5 L16 20.5 M12 20 L20 14" stroke="#6f6f6f" stroke-width="1.1"/><path d="M17 7 L24 8 L23 12 L20.5 14 L19 11 Z" fill="#6f6f6f"/></svg>
<div style="left:1131px;top:41px;width:1px;height:35px;background:#7a7a7a"></div>
<div style="left:1132px;top:41px;width:221px;height:35px;background:repeating-linear-gradient(180deg,#f6f6f6 0 2px,#f0f0f0 2px 4px)"></div>
<div style="left:1353px;top:41px;width:1px;height:35px;background:#c8c8c8"></div>
<svg style="left:1135px;top:44px;" width="7" height="31" viewBox="0 0 7 31"><rect x="0" y="0" width="1" height="30" fill="#fff"/><rect x="2" y="0" width="1" height="30" fill="#7c7c7c"/><rect x="3" y="0" width="2" height="30" fill="#fff"/><rect x="5" y="0" width="1" height="30" fill="#7c7c7c"/><rect x="0" y="29" width="6" height="1" fill="#7c7c7c"/></svg>
<div class="t" style="left:1142.5px;top:42.69px;font-size:11px;line-height:13px;color:#6a6a6a;font-weight:normal;">Min</div>
<div class="t" style="left:1142.5px;top:59.22px;font-size:10.9px;line-height:13px;color:#6a6a6a;font-weight:normal;">Max</div>
<div class="fld" style="left:1164px;top:42px;width:108px;height:16px;border-color:#b8b8b8;box-shadow:none;background:repeating-linear-gradient(180deg,#eeeeee 0 2px,#e8e8e8 2px 4px)"></div>
<div class="fld" style="left:1164px;top:59px;width:108px;height:16px;border-color:#b8b8b8;box-shadow:none;background:repeating-linear-gradient(180deg,#eeeeee 0 2px,#e8e8e8 2px 4px)"></div>
<div class="t" style="left:1178px;top:43.62px;font-size:11.2px;line-height:13px;color:#5f5f5f;font-weight:normal;">300</div>
<div class="t" style="left:1175.5px;top:60.22px;font-size:10.9px;line-height:13px;color:#5f5f5f;font-weight:normal;">7000</div>
<div class="btn" style="left:1273px;top:43px;width:15px;height:32px;border-color:#c4c4c4"></div>
<svg style="left:1273px;top:43px;" width="15" height="32" viewBox="0 0 15 32"><rect x="4" y="5" width="7" height="7" fill="none" stroke="#000" stroke-width="1.2"/><path d="M7.5 1 V16 M1 8.5 H14" stroke="#000" stroke-width="1.2"/><rect x="4.6" y="5.6" width="5.8" height="5.8" fill="#fff"/><path d="M2.5 3.5 l1 1 M12.5 3.5 l-1 1 M2.5 13.5 l1 -1 M12.5 13.5 l-1 -1" stroke="#000" stroke-width="1"/><path d="M2 17.5 H13" stroke="#000" stroke-width="1" stroke-dasharray="1 1"/><path d="M7.5 20 A3.5 4 0 0 0 7.5 28 Z" fill="#000"/><path d="M7.5 20 A3.5 4 0 0 1 7.5 28 Z" fill="#000"/><path d="M7.3 21.2 A2.2 2.8 0 0 0 7.3 26.8 Z" fill="#fff"/></svg>
<svg style="left:1289px;top:43px;" width="64" height="14" viewBox="0 0 64 14"><defs><linearGradient id="sg0" x1="0" x2="1"><stop offset="0" stop-color="#bdbdbd"/><stop offset="1" stop-color="#e8e8e8"/></linearGradient><linearGradient id="sg1" x1="0" x2="1"><stop offset="0" stop-color="#e8e8e8"/><stop offset="1" stop-color="#ffffff"/></linearGradient><linearGradient id="sg2" x1="0" x2="1"><stop offset="0" stop-color="#ffffff"/><stop offset="1" stop-color="#e0e0e0"/></linearGradient><linearGradient id="sg3" x1="0" x2="1"><stop offset="0" stop-color="#e0e0e0"/><stop offset="1" stop-color="#cfcfcf"/></linearGradient><linearGradient id="sg4" x1="0" x2="1"><stop offset="0" stop-color="#cfcfcf"/><stop offset="1" stop-color="#b0b0b0"/></linearGradient><linearGradient id="sg5" x1="0" x2="1"><stop offset="0" stop-color="#b0b0b0"/><stop offset="1" stop-color="#999"/></linearGradient><linearGradient id="sg6" x1="0" x2="1"><stop offset="0" stop-color="#999"/><stop offset="1" stop-color="#888"/></linearGradient></defs><rect x="0" y="0" width="64" height="14" fill="#fff"/><rect x="1" y="0.5" width="61" height="13" fill="#7a7a7a"/><rect x="2" y="2" width="5" height="10" fill="url(#sg0)"/><rect x="8" y="2" width="5" height="10" fill="url(#sg1)"/><rect x="14" y="2" width="7" height="10" fill="url(#sg2)"/><rect x="22" y="2" width="9" height="10" fill="url(#sg3)"/><rect x="32" y="2" width="9" height="10" fill="url(#sg4)"/><rect x="42" y="2" width="8" height="10" fill="url(#sg5)"/><rect x="51" y="2" width="7" height="10" fill="url(#sg6)"/><rect x="1" y="12" width="61" height="1" fill="#7a7a7a"/></svg>
<svg style="left:1289px;top:59px;" width="64" height="14" viewBox="0 0 64 14"><defs><linearGradient id="sg0" x1="0" x2="1"><stop offset="0" stop-color="#bdbdbd"/><stop offset="1" stop-color="#e8e8e8"/></linearGradient><linearGradient id="sg1" x1="0" x2="1"><stop offset="0" stop-color="#e8e8e8"/><stop offset="1" stop-color="#ffffff"/></linearGradient><linearGradient id="sg2" x1="0" x2="1"><stop offset="0" stop-color="#ffffff"/><stop offset="1" stop-color="#e0e0e0"/></linearGradient><linearGradient id="sg3" x1="0" x2="1"><stop offset="0" stop-color="#e0e0e0"/><stop offset="1" stop-color="#cfcfcf"/></linearGradient><linearGradient id="sg4" x1="0" x2="1"><stop offset="0" stop-color="#cfcfcf"/><stop offset="1" stop-color="#b0b0b0"/></linearGradient><linearGradient id="sg5" x1="0" x2="1"><stop offset="0" stop-color="#b0b0b0"/><stop offset="1" stop-color="#999"/></linearGradient><linearGradient id="sg6" x1="0" x2="1"><stop offset="0" stop-color="#999"/><stop offset="1" stop-color="#888"/></linearGradient></defs><rect x="0" y="0" width="64" height="14" fill="#fff"/><rect x="1" y="0.5" width="61" height="13" fill="#7a7a7a"/><rect x="2" y="2" width="5" height="10" fill="url(#sg0)"/><rect x="8" y="2" width="5" height="10" fill="url(#sg1)"/><rect x="14" y="2" width="7" height="10" fill="url(#sg2)"/><rect x="22" y="2" width="9" height="10" fill="url(#sg3)"/><rect x="32" y="2" width="9" height="10" fill="url(#sg4)"/><rect x="42" y="2" width="8" height="10" fill="url(#sg5)"/><rect x="51" y="2" width="7" height="10" fill="url(#sg6)"/><rect x="1" y="12" width="61" height="1" fill="#7a7a7a"/></svg>
<div style="left:722px;top:760px;width:306px;height:88px;background:repeating-linear-gradient(180deg,#f2f2f2 0 2px,#eaeaea 2px 4px)"></div>
<div style="left:1028px;top:759px;width:1px;height:89px;background:#8a8a8a"></div>
<div style="left:1029px;top:759px;width:2px;height:89px;background:#fff"></div>
<div style="left:1031px;top:759px;width:1px;height:89px;background:#9a9a9a"></div>
<div style="left:725px;top:764px;width:12px;height:12px;border:1px solid #b8b8b8;background:linear-gradient(#fafafa,#e6e6e6)"></div>
<svg style="left:725px;top:764px;" width="12" height="12" viewBox="0 0 12 12"><path d="M3.3 3.3 L8.7 8.7 M8.7 3.3 L3.3 8.7" stroke="#000" stroke-width="1.8"/></svg>
<svg style="left:728px;top:779px;" width="7" height="68" viewBox="0 0 7 68"><rect x="0" y="0" width="1" height="67" fill="#fff"/><rect x="1" y="0" width="1" height="67" fill="#8a8a8a"/><rect x="2" y="0" width="2" height="67" fill="#fff"/><rect x="4" y="0" width="1" height="67" fill="#8a8a8a"/><rect x="0" y="66" width="5" height="1" fill="#8a8a8a"/></svg>
<div class="t" style="left:742.5px;top:769.69px;font-size:11px;line-height:13px;color:#707070;font-weight:normal;">X</div>
<div style="left:753px;top:764px;width:47px;height:26px;background:#fff;border:1px solid #a9a9a9;border-top-color:#6a6a6a;box-shadow:inset 0 1px 0 #b8b8b8, inset 0 2px 0 #e4e4e4"></div>
<div class="t" style="left:757.5px;top:771.53px;font-size:10px;line-height:12px;color:#5f5f5f;font-weight:normal;">105</div>
<div style="left:808px;top:765px;width:13px;height:22px;border:1px solid #c6c6c6;border-radius:6px;background:linear-gradient(90deg,#f4f4f4,#fcfcfc 50%,#eeeeee);box-shadow:0 1px 0 #e0e0e0"></div>
<svg style="left:808px;top:765px;" width="13" height="22" viewBox="0 0 13 22"><path d="M3.8 7.48 L6.5 3.7800000000000002 L9.2 7.48 Z" fill="#7a7a7a"/><path d="M3.8 14.520000000000001 L6.5 18.220000000000002 L9.2 14.520000000000001 Z" fill="#7a7a7a"/></svg>
<div style="left:824px;top:764px;width:87px;height:26px;background:#fff;border:1px solid #c4c4c4;border-top-color:#a8a8a8"></div>
<div class="t" style="left:826.5px;width:80px;text-align:right;top:769.86px;font-size:10.5px;line-height:13px;color:#5f5f5f;font-weight:normal;">-15.00</div>
<div class="t" style="left:742.5px;top:796.69px;font-size:11px;line-height:13px;color:#707070;font-weight:normal;">Y</div>
<div style="left:753px;top:791px;width:47px;height:26px;background:#fff;border:1px solid #a9a9a9;border-top-color:#6a6a6a;box-shadow:inset 0 1px 0 #b8b8b8, inset 0 2px 0 #e4e4e4"></div>
<div class="t" style="left:757.5px;top:798.53px;font-size:10px;line-height:12px;color:#5f5f5f;font-weight:normal;">109</div>
<div style="left:808px;top:792px;width:13px;height:22px;border:1px solid #c6c6c6;border-radius:6px;background:linear-gradient(90deg,#f4f4f4,#fcfcfc 50%,#eeeeee);box-shadow:0 1px 0 #e0e0e0"></div>
<svg style="left:808px;top:792px;" width="13" height="22" viewBox="0 0 13 22"><path d="M3.8 7.48 L6.5 3.7800000000000002 L9.2 7.48 Z" fill="#7a7a7a"/><path d="M3.8 14.520000000000001 L6.5 18.220000000000002 L9.2 14.520000000000001 Z" fill="#7a7a7a"/></svg>
<div style="left:824px;top:791px;width:87px;height:26px;background:#fff;border:1px solid #c4c4c4;border-top-color:#a8a8a8"></div>
<div class="t" style="left:826.5px;width:80px;text-align:right;top:796.86px;font-size:10.5px;line-height:13px;color:#5f5f5f;font-weight:normal;">-17.00</div>
<div class="t" style="left:742.5px;top:823.69px;font-size:11px;line-height:13px;color:#707070;font-weight:normal;">Z</div>
<div style="left:753px;top:818px;width:47px;height:26px;background:#fff;border:1px solid #a9a9a9;border-top-color:#6a6a6a;box-shadow:inset 0 1px 0 #b8b8b8, inset 0 2px 0 #e4e4e4"></div>
<div class="t" style="left:757.5px;top:825.53px;font-size:10px;line-height:12px;color:#5f5f5f;font-weight:normal;">76</div>
<div style="left:808px;top:819px;width:13px;height:22px;border:1px solid #c6c6c6;border-radius:6px;background:linear-gradient(90deg,#f4f4f4,#fcfcfc 50%,#eeeeee);box-shadow:0 1px 0 #e0e0e0"></div>
<svg style="left:808px;top:819px;" width="13" height="22" viewBox="0 0 13 22"><path d="M3.8 7.48 L6.5 3.7800000000000002 L9.2 7.48 Z" fill="#7a7a7a"/><path d="M3.8 14.520000000000001 L6.5 18.220000000000002 L9.2 14.520000000000001 Z" fill="#7a7a7a"/></svg>
<div style="left:824px;top:818px;width:87px;height:26px;background:#fff;border:1px solid #c4c4c4;border-top-color:#a8a8a8"></div>
<div class="t" style="left:826.5px;width:80px;text-align:right;top:823.86px;font-size:10.5px;line-height:13px;color:#5f5f5f;font-weight:normal;">4.00</div>
<div class="t" style="left:912.4px;top:780.86px;font-size:10.5px;line-height:13px;color:#6a6a6a;font-weight:normal;">Volume</div>
<div style="left:950px;top:775px;width:52px;height:26px;background:#fff;border:1px solid #a9a9a9;border-top-color:#6a6a6a;box-shadow:inset 0 1px 0 #b8b8b8, inset 0 2px 0 #e4e4e4"></div>
<div class="t" style="left:954px;top:782.40px;font-size:10.4px;line-height:12px;color:#5f5f5f;font-weight:normal;">0</div>
<div style="left:1010px;top:776px;width:13px;height:22px;border:1px solid #c6c6c6;border-radius:6px;background:linear-gradient(90deg,#f4f4f4,#fcfcfc 50%,#eeeeee);box-shadow:0 1px 0 #e0e0e0"></div>
<svg style="left:1010px;top:776px;" width="13" height="22" viewBox="0 0 13 22"><path d="M3.8 7.48 L6.5 3.7800000000000002 L9.2 7.48 Z" fill="#7a7a7a"/><path d="M3.8 14.520000000000001 L6.5 18.220000000000002 L9.2 14.520000000000001 Z" fill="#7a7a7a"/></svg>
<div class="t" style="left:912.6px;top:814.69px;font-size:11px;line-height:13px;color:#6a6a6a;font-weight:normal;">Intensity</div>
<div style="left:955px;top:813px;width:70px;height:18px;background:repeating-linear-gradient(180deg,#ececec 0 2px,#e6e6e6 2px 4px);border:1px solid #c4c4c4;border-top-color:#a8a8a8"></div>
<div style="left:1032px;top:760px;width:402px;height:88px;background:repeating-linear-gradient(180deg,#f2f2f2 0 2px,#eaeaea 2px 4px)"></div>
<div style="left:1434px;top:759px;width:1px;height:89px;background:#fafafa"></div>
<div style="left:1435px;top:759px;width:1px;height:89px;background:#8c8c8c"></div>
<div style="left:1436px;top:759px;width:1px;height:89px;background:#fff"></div>
<div style="left:1437px;top:759px;width:1px;height:89px;background:#a0a0a0"></div>
<div style="left:1035px;top:764px;width:12px;height:12px;border:1px solid #b8b8b8;background:linear-gradient(#fafafa,#e6e6e6)"></div>
<svg style="left:1035px;top:764px;" width="12" height="12" viewBox="0 0 12 12"><path d="M3.3 3.3 L8.7 8.7 M8.7 3.3 L3.3 8.7" stroke="#000" stroke-width="1.8"/></svg>
<svg style="left:1038px;top:779px;" width="7" height="68" viewBox="0 0 7 68"><rect x="0" y="0" width="1" height="67" fill="#fff"/><rect x="1" y="0" width="1" height="67" fill="#8a8a8a"/><rect x="2" y="0" width="2" height="67" fill="#fff"/><rect x="4" y="0" width="1" height="67" fill="#8a8a8a"/><rect x="0" y="66" width="5" height="1" fill="#8a8a8a"/></svg>
<div style="left:1072px;top:762px;width:338px;height:63px;background:#fff;border:1px solid #8e8e8e;border-right-color:#9a9a9a"></div>
<svg style="left:1075px;top:765px;" width="15" height="10" viewBox="0 0 15 10"><path d="M0.7 5 C3 0.3 12 0.3 14.3 5 C12 9.7 3 9.7 0.7 5 Z" fill="#fff" stroke="#000" stroke-width="1.1"/><circle cx="7.5" cy="5" r="3.2" fill="#000"/><rect x="6.7" y="3.6" width="1.6" height="2.8" fill="#d4c23a"/><rect x="6.3" y="0.2" width="2.4" height="1.2" fill="#000"/><rect x="6.3" y="8.6" width="2.4" height="1.2" fill="#000"/></svg>
<svg style="left:1101px;top:765px;" width="8" height="10" viewBox="0 0 8 10"><path d="M0.6 4.5 L2.4 0.6 L5.6 0.6 L7.4 4.5 L7.4 9.4 L0.6 9.4 Z" fill="#fff" stroke="#000" stroke-width="1.2" stroke-linejoin="miter"/><path d="M0.6 4.6 H7.4" stroke="#000" stroke-width="1.1"/><rect x="1.2" y="5.2" width="5.6" height="3.6" fill="#eae4ee"/><rect x="2.9" y="6.3" width="2.2" height="1.2" fill="#000"/></svg>
<div class="t" style="left:1119.5px;top:763.86px;font-size:10.5px;line-height:13px;color:#6a6a6a;font-weight:normal;">FMRIB58_FA-skeleton_1mm</div>
<div class="t" style="left:1256.5px;top:763.86px;font-size:10.5px;line-height:13px;color:#6a6a6a;font-weight:normal;">1</div>
<svg style="left:1075px;top:781px;" width="15" height="10" viewBox="0 0 15 10"><path d="M0.7 5 C3 0.3 12 0.3 14.3 5 C12 9.7 3 9.7 0.7 5 Z" fill="#fff" stroke="#000" stroke-width="1.1"/><circle cx="7.5" cy="5" r="3.2" fill="#000"/><rect x="6.7" y="3.6" width="1.6" height="2.8" fill="#d4c23a"/><rect x="6.3" y="0.2" width="2.4" height="1.2" fill="#000"/><rect x="6.3" y="8.6" width="2.4" height="1.2" fill="#000"/></svg>
<svg style="left:1101px;top:781px;" width="8" height="10" viewBox="0 0 8 10"><path d="M0.6 4.5 L2.4 0.6 L5.6 0.6 L7.4 4.5 L7.4 9.4 L0.6 9.4 Z" fill="#fff" stroke="#000" stroke-width="1.2" stroke-linejoin="miter"/><path d="M0.6 4.6 H7.4" stroke="#000" stroke-width="1.1"/><rect x="1.2" y="5.2" width="5.6" height="3.6" fill="#eae4ee"/><rect x="2.9" y="6.3" width="2.2" height="1.2" fill="#000"/></svg>
<div class="t" style="left:1119.5px;top:779.86px;font-size:10.5px;line-height:13px;color:#6a6a6a;font-weight:normal;">MNI152_T1_1mm</div>
<div class="t" style="left:1256.5px;top:779.86px;font-size:10.5px;line-height:13px;color:#6a6a6a;font-weight:normal;">1</div>
<svg style="left:1101px;top:797px;" width="8" height="10" viewBox="0 0 8 10"><path d="M0.6 4.5 L2.4 0.6 L5.6 0.6 L7.4 4.5 L7.4 9.4 L0.6 9.4 Z" fill="#fff" stroke="#000" stroke-width="1.2" stroke-linejoin="miter"/><path d="M0.6 4.6 H7.4" stroke="#000" stroke-width="1.1"/><rect x="1.2" y="5.2" width="5.6" height="3.6" fill="#eae4ee"/><rect x="2.9" y="6.3" width="2.2" height="1.2" fill="#000"/></svg>
<div class="t" style="left:1119.5px;top:795.86px;font-size:10.5px;line-height:13px;color:#6a6a6a;font-weight:normal;">FMRIB58_FA_1mm</div>
<div class="t" style="left:1256.5px;top:795.86px;font-size:10.5px;line-height:13px;color:#6a6a6a;font-weight:normal;">1</div>
<svg style="left:1282px;top:798px;" width="10" height="10" viewBox="0 0 10 10"><path d="M4.5 0.5 L0.8 5 L4.5 9.5 M7 0.5 L3.3 5 L7 9.5 M9.5 0.5 L5.8 5 L9.5 9.5" fill="none" stroke="#000" stroke-width="1"/></svg>
<div class="btn" style="left:1411px;top:762px;width:22px;height:22px;border-color:#c0c0c0"></div>
<svg style="left:1411px;top:762px;" width="22" height="22" viewBox="0 0 22 22"><path d="M11 5 L16 11 L13 11 L13 16 L9 16 L9 11 L6 11 Z" fill="#000"/></svg>
<div class="btn" style="left:1411px;top:785px;width:22px;height:22px;border-color:#c0c0c0"></div>
<svg style="left:1411px;top:785px;" width="22" height="22" viewBox="0 0 22 22"><path d="M11 17 L16 11 L13 11 L13 6 L9 6 L9 11 L6 11 Z" fill="#8a8a8a"/></svg>
<div style="left:1051px;top:826px;width:22px;height:22px;border:1px solid #c8c8c8;border-bottom:none;border-right-color:#d8d8d8;background:linear-gradient(#f0f0f0,#e4e4e4)"></div>
<svg style="left:1051px;top:826px;" width="22" height="22" viewBox="0 0 22 22"><circle cx="10.5" cy="11.5" r="7.6" fill="#0a1a7a"/><path d="M10.2 9.2 L12.6 9.2 L11.3 16.5 L8.9 16.5 Z" fill="#fff"/><circle cx="12.3" cy="6.8" r="1.5" fill="#fff"/></svg>
<svg style="left:1075px;top:832px;" width="15" height="10" viewBox="0 0 15 10"><path d="M0.7 5 C3 0.3 12 0.3 14.3 5 C12 9.7 3 9.7 0.7 5 Z" fill="#fff" stroke="#000" stroke-width="1.1"/><circle cx="7.5" cy="5" r="3.2" fill="#000"/><rect x="6.7" y="3.6" width="1.6" height="2.8" fill="#d4c23a"/><rect x="6.3" y="0.2" width="2.4" height="1.2" fill="#000"/><rect x="6.3" y="8.6" width="2.4" height="1.2" fill="#000"/></svg>
<div style="left:1093px;top:830px;width:14px;height:14px;border:1px solid #b0b0b0;border-radius:2px;background:linear-gradient(#ffffff,#ececec);box-shadow:0 1px 0 #d8d8d8"></div>
<svg style="left:1114px;top:832px;" width="8" height="10" viewBox="0 0 8 10"><path d="M0.6 4.5 L2.4 0.6 L5.6 0.6 L7.4 4.5 L7.4 9.4 L0.6 9.4 Z" fill="#fff" stroke="#000" stroke-width="1.2" stroke-linejoin="miter"/><path d="M0.6 4.6 H7.4" stroke="#000" stroke-width="1.1"/><rect x="1.2" y="5.2" width="5.6" height="3.6" fill="#eae4ee"/><rect x="2.9" y="6.3" width="2.2" height="1.2" fill="#000"/></svg>
<div style="left:1129px;top:830px;width:14px;height:14px;border:1px solid #b0b0b0;border-radius:2px;background:linear-gradient(#ffffff,#ececec);box-shadow:0 1px 0 #d8d8d8"></div>
<svg style="left:1129px;top:828px;" width="14" height="14" viewBox="0 0 14 14"><path d="M2.8 8 L6 12.2 L12.5 0.5" fill="none" stroke="#7e7e7e" stroke-width="2.1"/></svg>
<div style="left:1148px;top:830px;width:139px;height:6px;border-radius:3px;background:linear-gradient(#b8b8b8,#dedede 60%,#f4f4f4);border:1px solid #c0c0c0"></div>
<svg style="left:1267px;top:826px;" width="20" height="21" viewBox="0 0 20 21"><defs><linearGradient id="thg" x1="0" y1="0" x2="0" y2="1"><stop offset="0" stop-color="#ffffff"/><stop offset=".5" stop-color="#d8d8d8"/><stop offset="1" stop-color="#ffffff"/></linearGradient></defs><path d="M2 3 Q2 1 4 1 L15 1 Q17 1 17 3 L17 12 L9.5 19.5 L2 12 Z" fill="url(#thg)" stroke="#777" stroke-width="1"/></svg>
<div style="left:1438px;top:22px;width:1px;height:827px;background:#8a8a8a"></div>
<svg style="left:0;top:0" width="1440" height="874" viewBox="0 0 1440 874"><defs><filter id="b3" x="-20%" y="-20%" width="140%" height="140%" color-interpolation-filters="sRGB"><feGaussianBlur stdDeviation="2.6"/></filter><filter id="b2" x="-20%" y="-20%" width="140%" height="140%" color-interpolation-filters="sRGB"><feGaussianBlur stdDeviation="2"/></filter><filter id="b1" x="-20%" y="-20%" width="140%" height="140%" color-interpolation-filters="sRGB"><feGaussianBlur stdDeviation="1.2"/></filter><filter id="b5" x="-20%" y="-20%" width="140%" height="140%" color-interpolation-filters="sRGB"><feGaussianBlur stdDeviation="4.5"/></filter></defs><clipPath id="c1"><rect x="18" y="102" width="330" height="293"/></clipPath><g clip-path="url(#c1)"><rect x="18" y="102" width="330" height="293" fill="#000"/><clipPath id="c1o"><path d="M201.0 176.0 C212.0 176.0 217.7 172.8 226.0 178.0 C234.3 183.2 244.8 197.5 251.0 207.0 C257.2 216.5 260.4 225.8 263.0 235.0 C265.6 244.2 266.1 254.0 266.7 262.0 C267.3 270.0 268.0 275.0 266.7 283.0 C265.4 291.0 262.6 302.8 259.0 310.0 C255.4 317.2 250.7 322.7 245.0 326.0 C239.3 329.3 231.2 330.3 225.0 330.0 C218.8 329.7 212.5 325.7 208.0 324.0 C203.5 322.3 202.7 320.5 198.0 320.0 C193.3 319.5 186.3 320.0 180.0 321.0 C173.7 322.0 167.5 324.8 160.0 326.0 C152.5 327.2 143.0 329.2 135.0 328.0 C127.0 326.8 118.5 324.2 112.0 319.0 C105.5 313.8 99.1 306.2 96.0 297.0 C92.9 287.8 92.8 274.3 93.5 264.0 C94.2 253.7 97.7 242.8 100.0 235.0 C102.3 227.2 102.3 224.7 107.6 217.0 C112.9 209.3 123.3 195.5 132.0 189.0 C140.7 182.5 148.5 180.2 160.0 178.0 C171.5 175.8 190.0 176.0 201.0 176.0 Z"/></clipPath><g filter="url(#b3)"><g clip-path="url(#c1o)"><path d="M201.0 176.0 C212.0 176.0 217.7 172.8 226.0 178.0 C234.3 183.2 244.8 197.5 251.0 207.0 C257.2 216.5 260.4 225.8 263.0 235.0 C265.6 244.2 266.1 254.0 266.7 262.0 C267.3 270.0 268.0 275.0 266.7 283.0 C265.4 291.0 262.6 302.8 259.0 310.0 C255.4 317.2 250.7 322.7 245.0 326.0 C239.3 329.3 231.2 330.3 225.0 330.0 C218.8 329.7 212.5 325.7 208.0 324.0 C203.5 322.3 202.7 320.5 198.0 320.0 C193.3 319.5 186.3 320.0 180.0 321.0 C173.7 322.0 167.5 324.8 160.0 326.0 C152.5 327.2 143.0 329.2 135.0 328.0 C127.0 326.8 118.5 324.2 112.0 319.0 C105.5 313.8 99.1 306.2 96.0 297.0 C92.9 287.8 92.8 274.3 93.5 264.0 C94.2 253.7 97.7 242.8 100.0 235.0 C102.3 227.2 102.3 224.7 107.6 217.0 C112.9 209.3 123.3 195.5 132.0 189.0 C140.7 182.5 148.5 180.2 160.0 178.0 C171.5 175.8 190.0 176.0 201.0 176.0 Z" fill="#484848" stroke="#808080" stroke-width="14"/></g><path d="M160.0 244.0 C168.3 239.3 191.3 237.0 200.0 238.0 C208.7 239.0 211.0 241.7 212.0 250.0 C213.0 258.3 210.0 278.0 206.0 288.0 C202.0 298.0 193.7 307.3 188.0 310.0 C182.3 312.7 178.3 311.3 172.0 304.0 C165.7 296.7 152.0 276.0 150.0 266.0 C148.0 256.0 151.7 248.7 160.0 244.0 Z" fill="#727272"/><path d="M178.0 200.0 C178.7 203.3 180.3 215.3 182.0 220.0 C183.7 224.7 187.0 226.7 188.0 228.0" fill="none" stroke="#1c1c1c" stroke-width="9" stroke-linecap="round"/><path d="M163.0 244.0 C165.8 247.0 175.5 254.3 180.0 262.0 C184.5 269.7 188.3 285.3 190.0 290.0" fill="none" stroke="#1c1c1c" stroke-width="6" stroke-linecap="round"/><path d="M100.0 250.0 C103.3 250.8 113.7 255.0 120.0 255.0 C126.3 255.0 135.0 250.8 138.0 250.0" fill="none" stroke="#1c1c1c" stroke-width="6" stroke-linecap="round"/><path d="M262.0 250.0 C259.2 250.8 250.7 254.7 245.0 255.0 C239.3 255.3 230.8 252.5 228.0 252.0" fill="none" stroke="#1c1c1c" stroke-width="6" stroke-linecap="round"/><path d="M140.0 310.0 C143.3 311.7 156.7 318.3 160.0 320.0" fill="none" stroke="#1c1c1c" stroke-width="6" stroke-linecap="round"/><path d="M230.0 318.0 C233.3 317.0 246.7 313.0 250.0 312.0" fill="none" stroke="#1c1c1c" stroke-width="6" stroke-linecap="round"/><path d="M108.0 283.0 C110.7 282.5 121.3 280.5 124.0 280.0" fill="none" stroke="#1c1c1c" stroke-width="5" stroke-linecap="round"/><path d="M250.0 285.0 C252.0 284.5 260.0 282.5 262.0 282.0" fill="none" stroke="#1c1c1c" stroke-width="5" stroke-linecap="round"/><path d="M188.0 192.0 C188.7 195.8 190.7 208.7 192.0 215.0 C193.3 221.3 195.3 227.5 196.0 230.0" fill="none" stroke="#1c1c1c" stroke-width="8" stroke-linecap="round"/><path d="M212.0 192.0 C211.3 195.8 208.7 211.2 208.0 215.0" fill="none" stroke="#1c1c1c" stroke-width="6" stroke-linecap="round"/><path d="M112.0 276.0 C113.0 278.0 117.0 286.0 118.0 288.0" fill="none" stroke="#1c1c1c" stroke-width="7" stroke-linecap="round"/><path d="M140.0 296.0 C142.5 298.3 152.5 307.7 155.0 310.0" fill="none" stroke="#1c1c1c" stroke-width="8" stroke-linecap="round"/><path d="M252.0 276.0 C251.0 278.0 247.0 286.0 246.0 288.0" fill="none" stroke="#1c1c1c" stroke-width="7" stroke-linecap="round"/><path d="M226.0 296.0 C223.7 298.3 214.3 307.7 212.0 310.0" fill="none" stroke="#1c1c1c" stroke-width="8" stroke-linecap="round"/><path d="M128.0 205.0 C128.3 207.8 129.7 219.2 130.0 222.0" fill="none" stroke="#1c1c1c" stroke-width="6" stroke-linecap="round"/><path d="M232.0 205.0 C232.3 207.8 233.7 219.2 234.0 222.0" fill="none" stroke="#1c1c1c" stroke-width="6" stroke-linecap="round"/><path d="M170.0 181.0 C167.8 184.2 159.4 193.7 156.7 200.0 C154.0 206.3 153.4 213.9 154.0 219.0 C154.6 224.1 157.2 227.4 160.5 230.4 C163.8 233.4 169.0 235.5 173.7 237.0 C178.4 238.5 184.3 239.9 188.8 239.4 C193.3 238.9 197.6 236.8 200.7 234.0 C203.8 231.2 206.1 226.6 207.3 222.8 C208.6 219.1 208.7 215.6 208.2 211.5 C207.7 207.4 206.6 203.3 204.4 198.3 C202.2 193.3 196.6 184.1 195.0 181.3" fill="none" stroke="#cccccc" stroke-width="8" stroke-linecap="round"/><path d="M139.7 192.6 C140.0 196.1 142.2 208.1 141.6 213.4 C141.0 218.8 138.6 221.7 135.9 224.7 C133.2 227.7 128.3 230.7 125.6 231.3 C122.9 231.9 121.2 231.5 119.9 228.5 C118.6 225.5 117.8 217.7 118.0 213.4 C118.2 209.2 120.5 204.7 121.0 203.0" fill="none" stroke="#cccccc" stroke-width="8" stroke-linecap="round"/><path d="M135.9 224.7 C138.4 224.7 148.5 224.7 151.0 224.7" fill="none" stroke="#cccccc" stroke-width="8" stroke-linecap="round"/><path d="M124.6 230.4 C126.5 231.5 134.0 235.9 135.9 237.0" fill="none" stroke="#cccccc" stroke-width="8" stroke-linecap="round"/><path d="M145.4 224.7 C145.6 227.5 146.3 237.0 146.3 241.7 C146.3 246.4 144.9 248.9 145.4 253.0 C145.9 257.1 147.3 261.2 149.2 266.2 C151.1 271.2 153.6 277.8 156.7 283.2 C159.8 288.6 165.5 293.9 168.0 298.3 C170.5 302.7 171.2 307.7 171.8 309.6" fill="none" stroke="#cccccc" stroke-width="8" stroke-linecap="round"/><path d="M100.0 266.2 C102.8 267.1 112.6 268.4 117.0 271.9 C121.4 275.4 125.2 283.2 126.5 287.0 C127.8 290.8 126.5 292.6 124.6 294.5 C122.7 296.4 119.0 298.6 115.2 298.3 C111.4 298.0 104.2 293.6 102.0 292.6" fill="none" stroke="#cccccc" stroke-width="8" stroke-linecap="round"/><path d="M126.5 287.0 C129.0 284.2 139.1 272.8 141.6 270.0" fill="none" stroke="#cccccc" stroke-width="8" stroke-linecap="round"/><path d="M130.3 283.2 C133.5 283.2 146.0 283.2 149.2 283.2" fill="none" stroke="#cccccc" stroke-width="8" stroke-linecap="round"/><path d="M130.0 302.0 C131.3 303.9 134.9 312.1 137.8 313.4 C140.7 314.7 145.7 310.2 147.3 309.6" fill="none" stroke="#cccccc" stroke-width="8" stroke-linecap="round"/><path d="M107.6 240.8 C109.2 239.8 115.4 236.0 117.0 235.0" fill="none" stroke="#cccccc" stroke-width="8" stroke-linecap="round"/><path d="M108.0 310.0 C108.7 311.3 111.3 316.7 112.0 318.0" fill="none" stroke="#cccccc" stroke-width="8" stroke-linecap="round"/><path d="M223.3 192.6 C223.2 195.1 222.4 203.3 222.4 207.7 C222.4 212.1 221.6 214.9 223.3 219.0 C225.0 223.1 228.3 229.5 232.7 232.3 C237.1 235.1 246.9 235.4 249.7 236.0" fill="none" stroke="#cccccc" stroke-width="8" stroke-linecap="round"/><path d="M249.7 221.0 C248.8 222.9 244.9 230.4 244.0 232.3" fill="none" stroke="#cccccc" stroke-width="8" stroke-linecap="round"/><path d="M216.0 202.0 C217.2 200.5 221.8 194.5 223.0 193.0" fill="none" stroke="#cccccc" stroke-width="8" stroke-linecap="round"/><path d="M209.2 224.7 C210.3 225.6 214.4 228.2 215.8 230.4 C217.2 232.6 217.4 234.5 217.6 237.9 C217.8 241.3 217.5 247.6 216.7 251.1 C215.9 254.6 213.7 255.5 212.9 258.7 C212.1 261.8 213.1 265.9 212.0 270.0 C210.9 274.1 208.5 279.1 206.3 283.2 C204.1 287.3 201.0 291.4 198.8 294.5 C196.6 297.6 194.1 300.8 193.1 302.0" fill="none" stroke="#cccccc" stroke-width="8" stroke-linecap="round"/><path d="M219.5 253.0 C220.1 255.5 222.0 263.7 223.3 268.1 C224.6 272.5 224.6 276.2 227.1 279.4 C229.6 282.5 235.9 283.9 238.4 287.0 C240.9 290.1 240.6 296.1 242.2 298.3 C243.8 300.5 244.7 301.0 247.8 300.2 C250.9 299.4 258.8 294.7 261.0 293.6" fill="none" stroke="#cccccc" stroke-width="8" stroke-linecap="round"/><path d="M213.9 284.0 C216.4 283.9 226.5 283.3 229.0 283.2" fill="none" stroke="#cccccc" stroke-width="8" stroke-linecap="round"/><path d="M238.4 287.0 C239.3 285.7 242.1 281.6 244.0 279.4 C245.9 277.2 246.9 275.1 249.7 273.8 C252.5 272.6 259.1 272.2 261.0 271.9" fill="none" stroke="#cccccc" stroke-width="8" stroke-linecap="round"/><path d="M248.0 264.0 C248.3 265.6 249.4 272.2 249.7 273.8" fill="none" stroke="#cccccc" stroke-width="8" stroke-linecap="round"/><path d="M212.0 308.0 C213.0 309.2 214.8 315.3 218.0 315.0 C221.2 314.7 228.8 307.5 231.0 306.0" fill="none" stroke="#cccccc" stroke-width="8" stroke-linecap="round"/><path d="M240.0 316.0 C241.0 314.7 245.0 309.3 246.0 308.0" fill="none" stroke="#cccccc" stroke-width="8" stroke-linecap="round"/><path d="M218.0 325.0 C219.7 325.3 226.3 326.7 228.0 327.0" fill="none" stroke="#cccccc" stroke-width="8" stroke-linecap="round"/><path d="M248.0 318.0 C249.0 317.7 253.0 316.3 254.0 316.0" fill="none" stroke="#cccccc" stroke-width="8" stroke-linecap="round"/><path d="M159.0 246.0 C160.2 247.5 163.7 252.3 166.0 255.0 C168.3 257.7 171.8 260.8 173.0 262.0" fill="none" stroke="#cccccc" stroke-width="8" stroke-linecap="round"/><path d="M162.0 258.0 C163.3 256.7 167.7 251.8 170.0 250.0 C172.3 248.2 175.0 247.5 176.0 247.0" fill="none" stroke="#cccccc" stroke-width="8" stroke-linecap="round"/><path d="M184.0 247.0 C185.0 248.3 188.0 252.5 190.0 255.0 C192.0 257.5 195.0 260.8 196.0 262.0" fill="none" stroke="#cccccc" stroke-width="8" stroke-linecap="round"/><path d="M200.0 245.0 C198.8 247.2 194.2 255.8 193.0 258.0" fill="none" stroke="#cccccc" stroke-width="8" stroke-linecap="round"/><path d="M177.0 268.0 C177.0 270.0 176.3 276.3 177.0 280.0 C177.7 283.7 180.3 288.3 181.0 290.0" fill="none" stroke="#cccccc" stroke-width="8" stroke-linecap="round"/><path d="M186.0 268.0 C186.0 270.0 186.8 276.3 186.0 280.0 C185.2 283.7 181.8 288.3 181.0 290.0" fill="none" stroke="#cccccc" stroke-width="8" stroke-linecap="round"/><path d="M181.0 290.0 C180.5 291.2 178.5 295.8 178.0 297.0" fill="none" stroke="#cccccc" stroke-width="8" stroke-linecap="round"/><path d="M165.0 276.0 C166.3 276.2 171.7 276.8 173.0 277.0" fill="none" stroke="#cccccc" stroke-width="8" stroke-linecap="round"/><path d="M191.0 276.0 C191.8 276.0 195.2 276.0 196.0 276.0" fill="none" stroke="#cccccc" stroke-width="8" stroke-linecap="round"/><path d="M168.0 285.0 C168.7 284.8 171.3 284.2 172.0 284.0" fill="none" stroke="#cccccc" stroke-width="8" stroke-linecap="round"/><path d="M196.0 230.0 C196.5 231.0 198.5 235.0 199.0 236.0" fill="none" stroke="#cccccc" stroke-width="8" stroke-linecap="round"/><path d="M170.0 226.0 C170.3 227.0 171.7 231.0 172.0 232.0" fill="none" stroke="#cccccc" stroke-width="8" stroke-linecap="round"/><path d="M145.0 228.0 C145.2 230.8 145.5 238.7 146.0 245.0 C146.5 251.3 146.2 259.5 148.0 266.0 C149.8 272.5 153.7 278.3 157.0 284.0 C160.3 289.7 164.5 295.3 168.0 300.0 C171.5 304.7 176.3 310.0 178.0 312.0" fill="none" stroke="#ffffff" stroke-width="12" stroke-linecap="round"/><path d="M214.0 230.0 C214.3 233.3 216.3 243.3 216.0 250.0 C215.7 256.7 213.7 264.3 212.0 270.0 C210.3 275.7 208.7 279.0 206.0 284.0 C203.3 289.0 199.0 295.3 196.0 300.0 C193.0 304.7 189.3 310.0 188.0 312.0" fill="none" stroke="#ffffff" stroke-width="12" stroke-linecap="round"/><path d="M154.0 222.0 C155.8 224.3 159.3 232.8 165.0 236.0 C170.7 239.2 181.0 242.0 188.0 241.0 C195.0 240.0 203.8 231.8 207.0 230.0" fill="none" stroke="#ffffff" stroke-width="9" stroke-linecap="round"/><path d="M146.0 222.0 C144.7 223.3 141.7 228.3 138.0 230.0 C134.3 231.7 127.3 234.5 124.0 232.0 C120.7 229.5 119.0 217.8 118.0 215.0" fill="none" stroke="#ffffff" stroke-width="7" stroke-linecap="round"/><path d="M218.0 228.0 C221.0 229.0 230.3 232.7 236.0 234.0 C241.7 235.3 249.3 235.7 252.0 236.0" fill="none" stroke="#ffffff" stroke-width="7" stroke-linecap="round"/><path d="M141.0 195.0 C141.2 198.3 141.8 211.7 142.0 215.0" fill="none" stroke="#ffffff" stroke-width="6" stroke-linecap="round"/><path d="M223.0 193.0 C223.0 197.5 223.0 215.5 223.0 220.0" fill="none" stroke="#ffffff" stroke-width="6" stroke-linecap="round"/><path d="M100.0 268.0 C103.0 268.8 113.3 269.7 118.0 273.0 C122.7 276.3 124.0 288.5 128.0 288.0 C132.0 287.5 139.7 273.0 142.0 270.0" fill="none" stroke="#ffffff" stroke-width="7" stroke-linecap="round"/><path d="M224.0 270.0 C226.3 272.8 231.7 286.7 238.0 287.0 C244.3 287.3 258.0 274.5 262.0 272.0" fill="none" stroke="#ffffff" stroke-width="7" stroke-linecap="round"/><path d="M238.0 287.0 C239.0 289.0 240.2 297.8 244.0 299.0 C247.8 300.2 258.2 294.8 261.0 294.0" fill="none" stroke="#ffffff" stroke-width="6" stroke-linecap="round"/></g><path d="M170.0 181.0 C167.8 184.2 159.4 193.7 156.7 200.0 C154.0 206.3 153.4 213.9 154.0 219.0 C154.6 224.1 157.2 227.4 160.5 230.4 C163.8 233.4 169.0 235.5 173.7 237.0 C178.4 238.5 184.3 239.9 188.8 239.4 C193.3 238.9 197.6 236.8 200.7 234.0 C203.8 231.2 206.1 226.6 207.3 222.8 C208.6 219.1 208.7 215.6 208.2 211.5 C207.7 207.4 206.6 203.3 204.4 198.3 C202.2 193.3 196.6 184.1 195.0 181.3" fill="none" stroke="#00c400" stroke-width="2.2" stroke-linejoin="round"/><path d="M139.7 192.6 C140.0 196.1 142.2 208.1 141.6 213.4 C141.0 218.8 138.6 221.7 135.9 224.7 C133.2 227.7 128.3 230.7 125.6 231.3 C122.9 231.9 121.2 231.5 119.9 228.5 C118.6 225.5 117.8 217.7 118.0 213.4 C118.2 209.2 120.5 204.7 121.0 203.0" fill="none" stroke="#00c400" stroke-width="2.2" stroke-linejoin="round"/><path d="M135.9 224.7 C138.4 224.7 148.5 224.7 151.0 224.7" fill="none" stroke="#00c400" stroke-width="2.2" stroke-linejoin="round"/><path d="M124.6 230.4 C126.5 231.5 134.0 235.9 135.9 237.0" fill="none" stroke="#00c400" stroke-width="2.2" stroke-linejoin="round"/><path d="M145.4 224.7 C145.6 227.5 146.3 237.0 146.3 241.7 C146.3 246.4 144.9 248.9 145.4 253.0 C145.9 257.1 147.3 261.2 149.2 266.2 C151.1 271.2 153.6 277.8 156.7 283.2 C159.8 288.6 165.5 293.9 168.0 298.3 C170.5 302.7 171.2 307.7 171.8 309.6" fill="none" stroke="#00c400" stroke-width="2.2" stroke-linejoin="round"/><path d="M100.0 266.2 C102.8 267.1 112.6 268.4 117.0 271.9 C121.4 275.4 125.2 283.2 126.5 287.0 C127.8 290.8 126.5 292.6 124.6 294.5 C122.7 296.4 119.0 298.6 115.2 298.3 C111.4 298.0 104.2 293.6 102.0 292.6" fill="none" stroke="#00c400" stroke-width="2.2" stroke-linejoin="round"/><path d="M126.5 287.0 C129.0 284.2 139.1 272.8 141.6 270.0" fill="none" stroke="#00c400" stroke-width="2.2" stroke-linejoin="round"/><path d="M130.3 283.2 C133.5 283.2 146.0 283.2 149.2 283.2" fill="none" stroke="#00c400" stroke-width="2.2" stroke-linejoin="round"/><path d="M130.0 302.0 C131.3 303.9 134.9 312.1 137.8 313.4 C140.7 314.7 145.7 310.2 147.3 309.6" fill="none" stroke="#00c400" stroke-width="2.2" stroke-linejoin="round"/><path d="M107.6 240.8 C109.2 239.8 115.4 236.0 117.0 235.0" fill="none" stroke="#00c400" stroke-width="2.2" stroke-linejoin="round"/><path d="M108.0 310.0 C108.7 311.3 111.3 316.7 112.0 318.0" fill="none" stroke="#00c400" stroke-width="2.2" stroke-linejoin="round"/><path d="M223.3 192.6 C223.2 195.1 222.4 203.3 222.4 207.7 C222.4 212.1 221.6 214.9 223.3 219.0 C225.0 223.1 228.3 229.5 232.7 232.3 C237.1 235.1 246.9 235.4 249.7 236.0" fill="none" stroke="#00c400" stroke-width="2.2" stroke-linejoin="round"/><path d="M249.7 221.0 C248.8 222.9 244.9 230.4 244.0 232.3" fill="none" stroke="#00c400" stroke-width="2.2" stroke-linejoin="round"/><path d="M216.0 202.0 C217.2 200.5 221.8 194.5 223.0 193.0" fill="none" stroke="#00c400" stroke-width="2.2" stroke-linejoin="round"/><path d="M209.2 224.7 C210.3 225.6 214.4 228.2 215.8 230.4 C217.2 232.6 217.4 234.5 217.6 237.9 C217.8 241.3 217.5 247.6 216.7 251.1 C215.9 254.6 213.7 255.5 212.9 258.7 C212.1 261.8 213.1 265.9 212.0 270.0 C210.9 274.1 208.5 279.1 206.3 283.2 C204.1 287.3 201.0 291.4 198.8 294.5 C196.6 297.6 194.1 300.8 193.1 302.0" fill="none" stroke="#00c400" stroke-width="2.2" stroke-linejoin="round"/><path d="M219.5 253.0 C220.1 255.5 222.0 263.7 223.3 268.1 C224.6 272.5 224.6 276.2 227.1 279.4 C229.6 282.5 235.9 283.9 238.4 287.0 C240.9 290.1 240.6 296.1 242.2 298.3 C243.8 300.5 244.7 301.0 247.8 300.2 C250.9 299.4 258.8 294.7 261.0 293.6" fill="none" stroke="#00c400" stroke-width="2.2" stroke-linejoin="round"/><path d="M213.9 284.0 C216.4 283.9 226.5 283.3 229.0 283.2" fill="none" stroke="#00c400" stroke-width="2.2" stroke-linejoin="round"/><path d="M238.4 287.0 C239.3 285.7 242.1 281.6 244.0 279.4 C245.9 277.2 246.9 275.1 249.7 273.8 C252.5 272.6 259.1 272.2 261.0 271.9" fill="none" stroke="#00c400" stroke-width="2.2" stroke-linejoin="round"/><path d="M248.0 264.0 C248.3 265.6 249.4 272.2 249.7 273.8" fill="none" stroke="#00c400" stroke-width="2.2" stroke-linejoin="round"/><path d="M212.0 308.0 C213.0 309.2 214.8 315.3 218.0 315.0 C221.2 314.7 228.8 307.5 231.0 306.0" fill="none" stroke="#00c400" stroke-width="2.2" stroke-linejoin="round"/><path d="M240.0 316.0 C241.0 314.7 245.0 309.3 246.0 308.0" fill="none" stroke="#00c400" stroke-width="2.2" stroke-linejoin="round"/><path d="M218.0 325.0 C219.7 325.3 226.3 326.7 228.0 327.0" fill="none" stroke="#00c400" stroke-width="2.2" stroke-linejoin="round"/><path d="M248.0 318.0 C249.0 317.7 253.0 316.3 254.0 316.0" fill="none" stroke="#00c400" stroke-width="2.2" stroke-linejoin="round"/><path d="M159.0 246.0 C160.2 247.5 163.7 252.3 166.0 255.0 C168.3 257.7 171.8 260.8 173.0 262.0" fill="none" stroke="#00c400" stroke-width="2.2" stroke-linejoin="round"/><path d="M162.0 258.0 C163.3 256.7 167.7 251.8 170.0 250.0 C172.3 248.2 175.0 247.5 176.0 247.0" fill="none" stroke="#00c400" stroke-width="2.2" stroke-linejoin="round"/><path d="M184.0 247.0 C185.0 248.3 188.0 252.5 190.0 255.0 C192.0 257.5 195.0 260.8 196.0 262.0" fill="none" stroke="#00c400" stroke-width="2.2" stroke-linejoin="round"/><path d="M200.0 245.0 C198.8 247.2 194.2 255.8 193.0 258.0" fill="none" stroke="#00c400" stroke-width="2.2" stroke-linejoin="round"/><path d="M177.0 268.0 C177.0 270.0 176.3 276.3 177.0 280.0 C177.7 283.7 180.3 288.3 181.0 290.0" fill="none" stroke="#00c400" stroke-width="2.2" stroke-linejoin="round"/><path d="M186.0 268.0 C186.0 270.0 186.8 276.3 186.0 280.0 C185.2 283.7 181.8 288.3 181.0 290.0" fill="none" stroke="#00c400" stroke-width="2.2" stroke-linejoin="round"/><path d="M181.0 290.0 C180.5 291.2 178.5 295.8 178.0 297.0" fill="none" stroke="#00c400" stroke-width="2.2" stroke-linejoin="round"/><path d="M165.0 276.0 C166.3 276.2 171.7 276.8 173.0 277.0" fill="none" stroke="#00c400" stroke-width="2.2" stroke-linejoin="round"/><path d="M191.0 276.0 C191.8 276.0 195.2 276.0 196.0 276.0" fill="none" stroke="#00c400" stroke-width="2.2" stroke-linejoin="round"/><path d="M168.0 285.0 C168.7 284.8 171.3 284.2 172.0 284.0" fill="none" stroke="#00c400" stroke-width="2.2" stroke-linejoin="round"/><path d="M196.0 230.0 C196.5 231.0 198.5 235.0 199.0 236.0" fill="none" stroke="#00c400" stroke-width="2.2" stroke-linejoin="round"/><path d="M170.0 226.0 C170.3 227.0 171.7 231.0 172.0 232.0" fill="none" stroke="#00c400" stroke-width="2.2" stroke-linejoin="round"/><ellipse cx="165" cy="257" rx="3.5" ry="3" fill="#00c400"/><ellipse cx="181" cy="311" rx="6" ry="3.5" fill="#00c400"/><ellipse cx="199" cy="252" rx="1.5" ry="4" fill="#00c400"/><ellipse cx="140" cy="214" rx="2" ry="4" fill="#00c400"/><ellipse cx="248" cy="230" rx="2" ry="3" fill="#00c400"/><ellipse cx="247" cy="300" rx="3" ry="2" fill="#00c400"/><ellipse cx="182" cy="287" rx="2.5" ry="2.5" fill="#00c400"/></g><clipPath id="c2"><rect x="372" y="102" width="329" height="293"/></clipPath><g clip-path="url(#c2)"><rect x="372" y="102" width="329" height="293" fill="#000"/><clipPath id="c2o"><path d="M538.0 176.0 C550.5 177.3 566.3 179.7 580.0 186.0 C593.7 192.3 609.7 204.0 620.0 214.0 C630.3 224.0 637.3 237.0 642.0 246.0 C646.7 255.0 648.0 260.7 648.0 268.0 C648.0 275.3 646.7 283.7 642.0 290.0 C637.3 296.3 630.3 302.7 620.0 306.0 C609.7 309.3 591.7 307.3 580.0 310.0 C568.3 312.7 558.7 319.3 550.0 322.0 C541.3 324.7 534.7 323.7 528.0 326.0 C521.3 328.3 518.0 333.3 510.0 336.0 C502.0 338.7 489.7 342.3 480.0 342.0 C470.3 341.7 458.3 340.0 452.0 334.0 C445.7 328.0 445.3 313.3 442.0 306.0 C438.7 298.7 435.0 297.3 432.0 290.0 C429.0 282.7 423.3 272.0 424.0 262.0 C424.7 252.0 428.3 241.3 436.0 230.0 C443.7 218.7 458.5 202.7 470.0 194.0 C481.5 185.3 493.7 181.0 505.0 178.0 C516.3 175.0 525.5 174.7 538.0 176.0 Z"/></clipPath><g filter="url(#b3)"><g clip-path="url(#c2o)"><path d="M538.0 176.0 C550.5 177.3 566.3 179.7 580.0 186.0 C593.7 192.3 609.7 204.0 620.0 214.0 C630.3 224.0 637.3 237.0 642.0 246.0 C646.7 255.0 648.0 260.7 648.0 268.0 C648.0 275.3 646.7 283.7 642.0 290.0 C637.3 296.3 630.3 302.7 620.0 306.0 C609.7 309.3 591.7 307.3 580.0 310.0 C568.3 312.7 558.7 319.3 550.0 322.0 C541.3 324.7 534.7 323.7 528.0 326.0 C521.3 328.3 518.0 333.3 510.0 336.0 C502.0 338.7 489.7 342.3 480.0 342.0 C470.3 341.7 458.3 340.0 452.0 334.0 C445.7 328.0 445.3 313.3 442.0 306.0 C438.7 298.7 435.0 297.3 432.0 290.0 C429.0 282.7 423.3 272.0 424.0 262.0 C424.7 252.0 428.3 241.3 436.0 230.0 C443.7 218.7 458.5 202.7 470.0 194.0 C481.5 185.3 493.7 181.0 505.0 178.0 C516.3 175.0 525.5 174.7 538.0 176.0 Z" fill="#484848" stroke="#808080" stroke-width="14"/></g><path d="M510.0 256.0 C515.0 255.3 528.3 253.8 540.0 252.0 C551.7 250.2 569.2 243.7 580.0 245.0 C590.8 246.3 602.0 254.2 605.0 260.0 C608.0 265.8 599.2 276.7 598.0 280.0" fill="none" stroke="#1c1c1c" stroke-width="7" stroke-linecap="round"/><path d="M500.0 205.0 C503.3 206.7 516.7 213.3 520.0 215.0" fill="none" stroke="#1c1c1c" stroke-width="6" stroke-linecap="round"/><path d="M460.0 245.0 C462.5 248.8 468.3 261.3 475.0 268.0 C481.7 274.7 495.8 282.2 500.0 285.0" fill="none" stroke="#1c1c1c" stroke-width="7" stroke-linecap="round"/><path d="M470.0 295.0 C475.0 295.8 491.7 299.2 500.0 300.0 C508.3 300.8 516.7 300.0 520.0 300.0" fill="none" stroke="#1c1c1c" stroke-width="6" stroke-linecap="round"/><path d="M540.0 298.0 C546.7 297.7 573.3 296.3 580.0 296.0" fill="none" stroke="#1c1c1c" stroke-width="5" stroke-linecap="round"/><path d="M559.8 227.0 C556.5 227.3 546.6 227.8 540.0 229.0 C533.4 230.2 526.0 231.8 520.0 234.0 C514.0 236.2 507.3 239.0 504.0 242.0 C500.7 245.0 499.7 248.3 500.0 252.0 C500.3 255.7 505.0 262.0 506.0 264.0" fill="none" stroke="#cccccc" stroke-width="8" stroke-linecap="round"/><path d="M496.0 186.0 C494.3 188.7 490.0 198.0 486.0 202.0 C482.0 206.0 473.7 206.7 472.0 210.0 C470.3 213.3 473.7 218.0 476.0 222.0 C478.3 226.0 482.7 231.5 486.0 234.0 C489.3 236.5 494.3 236.5 496.0 237.0" fill="none" stroke="#cccccc" stroke-width="8" stroke-linecap="round"/><path d="M508.0 182.0 C508.3 184.3 507.3 193.3 510.0 196.0 C512.7 198.7 520.8 199.0 524.0 198.0 C527.2 197.0 526.7 190.3 529.0 190.0 C531.3 189.7 534.5 194.2 538.0 196.0 C541.5 197.8 543.0 199.2 550.0 201.0 C557.0 202.8 570.7 203.2 580.0 207.0 C589.3 210.8 598.3 217.8 606.0 224.0 C613.7 230.2 621.0 237.3 626.0 244.0 C631.0 250.7 634.7 258.0 636.0 264.0 C637.3 270.0 636.0 276.0 634.0 280.0 C632.0 284.0 627.7 286.5 624.0 288.0 C620.3 289.5 614.8 290.0 612.0 289.0 C609.2 288.0 607.7 286.2 607.0 282.0 C606.3 277.8 609.2 269.3 608.0 264.0 C606.8 258.7 603.7 254.3 600.0 250.0 C596.3 245.7 592.0 241.8 586.0 238.0 C580.0 234.2 571.7 228.5 564.0 227.0 C556.3 225.5 544.0 228.7 540.0 229.0" fill="none" stroke="#cccccc" stroke-width="8" stroke-linecap="round"/><path d="M448.0 228.0 C448.2 231.3 450.3 243.7 449.0 248.0 C447.7 252.3 442.5 251.3 440.0 254.0 C437.5 256.7 434.7 260.7 434.0 264.0 C433.3 267.3 433.7 270.7 436.0 274.0 C438.3 277.3 446.0 282.3 448.0 284.0" fill="none" stroke="#cccccc" stroke-width="8" stroke-linecap="round"/><path d="M456.0 250.0 C457.7 250.3 464.3 251.7 466.0 252.0" fill="none" stroke="#cccccc" stroke-width="8" stroke-linecap="round"/><path d="M438.0 244.0 C438.3 245.7 439.7 252.3 440.0 254.0" fill="none" stroke="#cccccc" stroke-width="8" stroke-linecap="round"/><path d="M436.0 274.0 C440.7 273.7 459.3 272.3 464.0 272.0" fill="none" stroke="#cccccc" stroke-width="8" stroke-linecap="round"/><path d="M500.0 216.0 C503.0 217.7 515.0 224.3 518.0 226.0" fill="none" stroke="#cccccc" stroke-width="8" stroke-linecap="round"/><path d="M514.0 260.0 C516.7 258.5 525.7 253.3 530.0 251.0 C534.3 248.7 537.0 246.3 540.0 246.0 C543.0 245.7 546.7 248.5 548.0 249.0" fill="none" stroke="#cccccc" stroke-width="8" stroke-linecap="round"/><path d="M518.0 274.0 C519.7 274.3 526.0 273.3 528.0 276.0 C530.0 278.7 528.3 287.7 530.0 290.0 C531.7 292.3 534.7 292.0 538.0 290.0 C541.3 288.0 547.3 282.3 550.0 278.0 C552.7 273.7 551.3 267.2 554.0 264.0 C556.7 260.8 562.3 258.3 566.0 259.0 C569.7 259.7 573.0 263.5 576.0 268.0 C579.0 272.5 582.7 283.0 584.0 286.0" fill="none" stroke="#cccccc" stroke-width="8" stroke-linecap="round"/><path d="M454.0 322.0 C458.3 322.3 473.3 322.7 480.0 324.0 C486.7 325.3 491.7 329.0 494.0 330.0" fill="none" stroke="#cccccc" stroke-width="8" stroke-linecap="round"/><path d="M456.0 310.0 C459.0 310.7 470.3 314.0 474.0 314.0 C477.7 314.0 475.3 310.7 478.0 310.0 C480.7 309.3 486.3 309.0 490.0 310.0 C493.7 311.0 498.3 315.0 500.0 316.0" fill="none" stroke="#cccccc" stroke-width="8" stroke-linecap="round"/><path d="M466.0 304.0 C467.7 307.0 474.3 319.0 476.0 322.0" fill="none" stroke="#cccccc" stroke-width="8" stroke-linecap="round"/><path d="M442.0 298.0 C443.7 303.3 450.3 324.7 452.0 330.0" fill="none" stroke="#cccccc" stroke-width="8" stroke-linecap="round"/><path d="M552.0 288.0 C554.7 287.3 565.3 284.7 568.0 284.0" fill="none" stroke="#cccccc" stroke-width="8" stroke-linecap="round"/><path d="M570.0 296.0 C573.3 294.8 586.7 290.2 590.0 289.0" fill="none" stroke="#cccccc" stroke-width="8" stroke-linecap="round"/><path d="M584.0 301.0 C588.3 301.0 605.7 301.0 610.0 301.0" fill="none" stroke="#cccccc" stroke-width="8" stroke-linecap="round"/><path d="M542.0 319.0 C546.0 317.8 558.7 314.2 566.0 312.0 C573.3 309.8 582.7 307.0 586.0 306.0" fill="none" stroke="#cccccc" stroke-width="8" stroke-linecap="round"/><path d="M478.0 300.0 C481.7 299.7 496.3 298.3 500.0 298.0" fill="none" stroke="#cccccc" stroke-width="8" stroke-linecap="round"/><path d="M560.0 233.0 C556.7 233.3 546.7 233.8 540.0 235.0 C533.3 236.2 525.3 237.5 520.0 240.0 C514.7 242.5 510.3 246.3 508.0 250.0 C505.7 253.7 506.3 260.0 506.0 262.0" fill="none" stroke="#ffffff" stroke-width="12" stroke-linecap="round"/><path d="M540.0 215.0 C546.7 215.5 569.0 215.2 580.0 218.0 C591.0 220.8 599.0 226.3 606.0 232.0 C613.0 237.7 618.8 244.8 622.0 252.0 C625.2 259.2 626.0 269.3 625.0 275.0 C624.0 280.7 617.5 284.2 616.0 286.0" fill="none" stroke="#c0c0c0" stroke-width="14" stroke-linecap="round"/><path d="M496.0 188.0 C494.0 190.7 487.3 199.0 484.0 204.0 C480.7 209.0 475.7 213.3 476.0 218.0 C476.3 222.7 482.0 228.3 486.0 232.0 C490.0 235.7 497.7 238.7 500.0 240.0" fill="none" stroke="#ffffff" stroke-width="9" stroke-linecap="round"/><path d="M448.0 232.0 C448.2 235.0 450.7 244.3 449.0 250.0 C447.3 255.7 438.2 260.3 438.0 266.0 C437.8 271.7 446.3 281.0 448.0 284.0" fill="none" stroke="#ffffff" stroke-width="6" stroke-linecap="round"/><path d="M500.0 318.0 C504.0 318.0 520.0 318.0 524.0 318.0" fill="none" stroke="#ffffff" stroke-width="9" stroke-linecap="round"/><path d="M530.0 282.0 C533.0 281.3 543.0 280.0 548.0 278.0 C553.0 276.0 558.0 271.3 560.0 270.0" fill="none" stroke="#ffffff" stroke-width="8" stroke-linecap="round"/><path d="M455.0 318.0 C459.2 318.3 473.3 318.7 480.0 320.0 C486.7 321.3 492.5 325.0 495.0 326.0" fill="none" stroke="#ffffff" stroke-width="5" stroke-linecap="round"/><path d="M540.0 202.0 C546.7 203.3 569.3 206.0 580.0 210.0 C590.7 214.0 600.0 223.3 604.0 226.0" fill="none" stroke="#ffffff" stroke-width="6" stroke-linecap="round"/><path d="M490.0 322.0 C493.3 323.0 504.0 328.0 510.0 328.0 C516.0 328.0 523.3 323.0 526.0 322.0" fill="none" stroke="#ffffff" stroke-width="10" stroke-linecap="round"/><path d="M462.0 318.0 C464.7 319.3 475.3 324.7 478.0 326.0" fill="none" stroke="#c8c8c8" stroke-width="6" stroke-linecap="round"/><path d="M508.0 250.0 C510.0 248.3 514.7 242.3 520.0 240.0 C525.3 237.7 536.7 236.7 540.0 236.0" fill="none" stroke="#ffffff" stroke-width="8" stroke-linecap="round"/><path d="M470.0 300.0 C473.3 302.0 484.2 309.0 490.0 312.0 C495.8 315.0 502.5 317.0 505.0 318.0" fill="none" stroke="#ffffff" stroke-width="6" stroke-linecap="round"/></g><path d="M559.8 227.0 C556.5 227.3 546.6 227.8 540.0 229.0 C533.4 230.2 526.0 231.8 520.0 234.0 C514.0 236.2 507.3 239.0 504.0 242.0 C500.7 245.0 499.7 248.3 500.0 252.0 C500.3 255.7 505.0 262.0 506.0 264.0" fill="none" stroke="#00c400" stroke-width="2.2" stroke-linejoin="round"/><path d="M496.0 186.0 C494.3 188.7 490.0 198.0 486.0 202.0 C482.0 206.0 473.7 206.7 472.0 210.0 C470.3 213.3 473.7 218.0 476.0 222.0 C478.3 226.0 482.7 231.5 486.0 234.0 C489.3 236.5 494.3 236.5 496.0 237.0" fill="none" stroke="#00c400" stroke-width="2.2" stroke-linejoin="round"/><path d="M508.0 182.0 C508.3 184.3 507.3 193.3 510.0 196.0 C512.7 198.7 520.8 199.0 524.0 198.0 C527.2 197.0 526.7 190.3 529.0 190.0 C531.3 189.7 534.5 194.2 538.0 196.0 C541.5 197.8 543.0 199.2 550.0 201.0 C557.0 202.8 570.7 203.2 580.0 207.0 C589.3 210.8 598.3 217.8 606.0 224.0 C613.7 230.2 621.0 237.3 626.0 244.0 C631.0 250.7 634.7 258.0 636.0 264.0 C637.3 270.0 636.0 276.0 634.0 280.0 C632.0 284.0 627.7 286.5 624.0 288.0 C620.3 289.5 614.8 290.0 612.0 289.0 C609.2 288.0 607.7 286.2 607.0 282.0 C606.3 277.8 609.2 269.3 608.0 264.0 C606.8 258.7 603.7 254.3 600.0 250.0 C596.3 245.7 592.0 241.8 586.0 238.0 C580.0 234.2 571.7 228.5 564.0 227.0 C556.3 225.5 544.0 228.7 540.0 229.0" fill="none" stroke="#00c400" stroke-width="2.2" stroke-linejoin="round"/><path d="M448.0 228.0 C448.2 231.3 450.3 243.7 449.0 248.0 C447.7 252.3 442.5 251.3 440.0 254.0 C437.5 256.7 434.7 260.7 434.0 264.0 C433.3 267.3 433.7 270.7 436.0 274.0 C438.3 277.3 446.0 282.3 448.0 284.0" fill="none" stroke="#00c400" stroke-width="2.2" stroke-linejoin="round"/><path d="M456.0 250.0 C457.7 250.3 464.3 251.7 466.0 252.0" fill="none" stroke="#00c400" stroke-width="2.2" stroke-linejoin="round"/><path d="M438.0 244.0 C438.3 245.7 439.7 252.3 440.0 254.0" fill="none" stroke="#00c400" stroke-width="2.2" stroke-linejoin="round"/><path d="M436.0 274.0 C440.7 273.7 459.3 272.3 464.0 272.0" fill="none" stroke="#00c400" stroke-width="2.2" stroke-linejoin="round"/><path d="M500.0 216.0 C503.0 217.7 515.0 224.3 518.0 226.0" fill="none" stroke="#00c400" stroke-width="2.2" stroke-linejoin="round"/><path d="M514.0 260.0 C516.7 258.5 525.7 253.3 530.0 251.0 C534.3 248.7 537.0 246.3 540.0 246.0 C543.0 245.7 546.7 248.5 548.0 249.0" fill="none" stroke="#00c400" stroke-width="2.2" stroke-linejoin="round"/><path d="M518.0 274.0 C519.7 274.3 526.0 273.3 528.0 276.0 C530.0 278.7 528.3 287.7 530.0 290.0 C531.7 292.3 534.7 292.0 538.0 290.0 C541.3 288.0 547.3 282.3 550.0 278.0 C552.7 273.7 551.3 267.2 554.0 264.0 C556.7 260.8 562.3 258.3 566.0 259.0 C569.7 259.7 573.0 263.5 576.0 268.0 C579.0 272.5 582.7 283.0 584.0 286.0" fill="none" stroke="#00c400" stroke-width="2.2" stroke-linejoin="round"/><path d="M454.0 322.0 C458.3 322.3 473.3 322.7 480.0 324.0 C486.7 325.3 491.7 329.0 494.0 330.0" fill="none" stroke="#00c400" stroke-width="2.2" stroke-linejoin="round"/><path d="M456.0 310.0 C459.0 310.7 470.3 314.0 474.0 314.0 C477.7 314.0 475.3 310.7 478.0 310.0 C480.7 309.3 486.3 309.0 490.0 310.0 C493.7 311.0 498.3 315.0 500.0 316.0" fill="none" stroke="#00c400" stroke-width="2.2" stroke-linejoin="round"/><path d="M466.0 304.0 C467.7 307.0 474.3 319.0 476.0 322.0" fill="none" stroke="#00c400" stroke-width="2.2" stroke-linejoin="round"/><path d="M442.0 298.0 C443.7 303.3 450.3 324.7 452.0 330.0" fill="none" stroke="#00c400" stroke-width="2.2" stroke-linejoin="round"/><path d="M552.0 288.0 C554.7 287.3 565.3 284.7 568.0 284.0" fill="none" stroke="#00c400" stroke-width="2.2" stroke-linejoin="round"/><path d="M570.0 296.0 C573.3 294.8 586.7 290.2 590.0 289.0" fill="none" stroke="#00c400" stroke-width="2.2" stroke-linejoin="round"/><path d="M584.0 301.0 C588.3 301.0 605.7 301.0 610.0 301.0" fill="none" stroke="#00c400" stroke-width="2.2" stroke-linejoin="round"/><path d="M542.0 319.0 C546.0 317.8 558.7 314.2 566.0 312.0 C573.3 309.8 582.7 307.0 586.0 306.0" fill="none" stroke="#00c400" stroke-width="2.2" stroke-linejoin="round"/><path d="M478.0 300.0 C481.7 299.7 496.3 298.3 500.0 298.0" fill="none" stroke="#00c400" stroke-width="2.2" stroke-linejoin="round"/><ellipse cx="521" cy="316" rx="4" ry="3" fill="#00c400"/><ellipse cx="538" cy="247" rx="4" ry="3" fill="#00c400"/><ellipse cx="592" cy="225" rx="2" ry="2" fill="#00c400"/><ellipse cx="496" cy="237" rx="3" ry="2" fill="#00c400"/></g><clipPath id="c3"><rect x="18" y="439" width="330" height="293"/></clipPath><g clip-path="url(#c3)"><rect x="18" y="439" width="330" height="293" fill="#000"/><clipPath id="c3o"><path d="M203.0 472.7 C216.8 474.9 226.4 483.4 235.4 494.2 C244.4 505.0 251.7 521.6 256.9 537.3 C262.0 553.0 265.4 571.8 266.3 588.4 C267.2 605.0 266.1 621.6 262.3 636.8 C258.5 652.0 251.0 669.0 243.4 679.8 C235.8 690.6 224.6 697.2 216.5 701.4 C208.4 705.6 199.9 704.4 195.0 705.0 C190.1 705.6 194.3 705.6 187.2 705.0 C180.1 704.4 163.5 705.6 152.3 701.4 C141.1 697.2 128.6 690.6 120.0 679.8 C111.5 669.0 104.8 651.6 101.0 636.8 C97.2 622.0 96.2 607.6 97.1 591.0 C98.0 574.4 102.7 551.3 106.5 537.0 C110.3 522.7 112.4 514.4 120.0 505.0 C127.6 495.6 138.5 486.2 152.3 480.8 C166.1 475.4 189.2 470.5 203.0 472.7 Z"/></clipPath><g filter="url(#b3)"><g clip-path="url(#c3o)"><path d="M203.0 472.7 C216.8 474.9 226.4 483.4 235.4 494.2 C244.4 505.0 251.7 521.6 256.9 537.3 C262.0 553.0 265.4 571.8 266.3 588.4 C267.2 605.0 266.1 621.6 262.3 636.8 C258.5 652.0 251.0 669.0 243.4 679.8 C235.8 690.6 224.6 697.2 216.5 701.4 C208.4 705.6 199.9 704.4 195.0 705.0 C190.1 705.6 194.3 705.6 187.2 705.0 C180.1 704.4 163.5 705.6 152.3 701.4 C141.1 697.2 128.6 690.6 120.0 679.8 C111.5 669.0 104.8 651.6 101.0 636.8 C97.2 622.0 96.2 607.6 97.1 591.0 C98.0 574.4 102.7 551.3 106.5 537.0 C110.3 522.7 112.4 514.4 120.0 505.0 C127.6 495.6 138.5 486.2 152.3 480.8 C166.1 475.4 189.2 470.5 203.0 472.7 Z" fill="#484848" stroke="#808080" stroke-width="14"/></g><path d="M162.0 628.0 C167.3 618.7 187.3 630.0 200.0 630.0 C212.7 630.0 232.7 618.7 238.0 628.0 C243.3 637.3 238.3 675.3 232.0 686.0 C225.7 696.7 210.7 692.0 200.0 692.0 C189.3 692.0 174.3 696.7 168.0 686.0 C161.7 675.3 156.7 637.3 162.0 628.0 Z" fill="#585858"/><path d="M165.0 588.0 C170.3 585.7 188.3 592.0 200.0 592.0 C211.7 592.0 229.7 585.7 235.0 588.0 C240.3 590.3 237.8 602.0 232.0 606.0 C226.2 610.0 210.7 612.0 200.0 612.0 C189.3 612.0 173.8 610.0 168.0 606.0 C162.2 602.0 159.7 590.3 165.0 588.0 Z" fill="#727272"/><path d="M175.0 540.0 C175.5 543.3 177.8 553.3 178.0 560.0 C178.2 566.7 176.3 576.7 176.0 580.0" fill="none" stroke="#1c1c1c" stroke-width="6" stroke-linecap="round"/><path d="M188.0 540.0 C187.7 543.3 186.0 553.3 186.0 560.0 C186.0 566.7 187.7 576.7 188.0 580.0" fill="none" stroke="#1c1c1c" stroke-width="6" stroke-linecap="round"/><path d="M115.0 550.0 C115.8 555.0 119.2 575.0 120.0 580.0" fill="none" stroke="#1c1c1c" stroke-width="6" stroke-linecap="round"/><path d="M250.0 550.0 C249.2 555.0 245.8 575.0 245.0 580.0" fill="none" stroke="#1c1c1c" stroke-width="6" stroke-linecap="round"/><path d="M150.0 610.0 C152.5 615.0 160.8 630.0 165.0 640.0 C169.2 650.0 173.3 665.0 175.0 670.0" fill="none" stroke="#1c1c1c" stroke-width="7" stroke-linecap="round"/><path d="M215.0 615.0 C213.3 619.2 208.3 630.8 205.0 640.0 C201.7 649.2 196.7 665.0 195.0 670.0" fill="none" stroke="#1c1c1c" stroke-width="7" stroke-linecap="round"/><path d="M110.0 650.0 C112.5 655.0 122.5 675.0 125.0 680.0" fill="none" stroke="#1c1c1c" stroke-width="6" stroke-linecap="round"/><path d="M252.0 650.0 C250.0 655.0 242.0 675.0 240.0 680.0" fill="none" stroke="#1c1c1c" stroke-width="6" stroke-linecap="round"/><path d="M182.0 490.0 C182.0 493.0 182.0 505.0 182.0 508.0" fill="none" stroke="#1c1c1c" stroke-width="8" stroke-linecap="round"/><path d="M151.0 548.0 C151.2 550.8 152.3 560.0 152.0 565.0 C151.7 570.0 149.5 575.8 149.0 578.0" fill="none" stroke="#1c1c1c" stroke-width="9" stroke-linecap="round"/><path d="M213.0 548.0 C212.8 550.8 211.7 560.0 212.0 565.0 C212.3 570.0 214.5 575.8 215.0 578.0" fill="none" stroke="#1c1c1c" stroke-width="9" stroke-linecap="round"/><path d="M104.0 598.0 C105.7 600.0 112.3 608.0 114.0 610.0" fill="none" stroke="#1c1c1c" stroke-width="9" stroke-linecap="round"/><path d="M112.0 642.0 C113.7 645.0 120.3 657.0 122.0 660.0" fill="none" stroke="#1c1c1c" stroke-width="8" stroke-linecap="round"/><path d="M260.0 598.0 C258.3 600.0 251.7 608.0 250.0 610.0" fill="none" stroke="#1c1c1c" stroke-width="9" stroke-linecap="round"/><path d="M252.0 642.0 C250.3 645.0 243.7 657.0 242.0 660.0" fill="none" stroke="#1c1c1c" stroke-width="8" stroke-linecap="round"/><path d="M120.0 540.0 C120.3 545.0 121.7 565.0 122.0 570.0" fill="none" stroke="#1c1c1c" stroke-width="6" stroke-linecap="round"/><path d="M244.0 540.0 C243.7 545.0 242.3 565.0 242.0 570.0" fill="none" stroke="#1c1c1c" stroke-width="6" stroke-linecap="round"/><path d="M163.0 483.5 C161.7 486.2 156.1 494.7 155.0 499.6 C153.9 504.5 154.5 509.6 156.3 513.0 C158.1 516.4 160.5 518.4 165.7 519.8 C170.8 521.1 182.3 521.6 187.2 521.1 C192.1 520.6 192.1 518.8 195.0 517.0 C197.9 515.2 202.6 513.8 204.4 510.4 C206.2 507.0 206.5 501.4 205.8 496.9 C205.1 492.4 201.3 485.7 200.4 483.5" fill="none" stroke="#cccccc" stroke-width="8" stroke-linecap="round"/><path d="M122.7 517.0 C124.9 516.3 132.4 513.4 136.0 513.0 C139.6 512.6 141.0 514.4 144.2 514.4 C147.4 514.4 153.2 513.2 155.0 513.0" fill="none" stroke="#cccccc" stroke-width="8" stroke-linecap="round"/><path d="M137.5 497.0 C137.2 499.7 136.2 510.3 136.0 513.0" fill="none" stroke="#cccccc" stroke-width="8" stroke-linecap="round"/><path d="M145.5 514.4 C145.9 517.3 148.9 526.8 148.2 531.9 C147.5 537.0 143.3 540.4 141.5 545.3 C139.7 550.2 137.9 554.8 137.5 561.5 C137.1 568.2 138.6 581.7 138.8 585.7" fill="none" stroke="#cccccc" stroke-width="8" stroke-linecap="round"/><path d="M148.2 531.9 C149.8 533.2 154.7 536.0 157.6 540.0 C160.5 544.0 165.5 550.7 165.7 556.1 C165.9 561.5 161.5 567.7 159.0 572.2 C156.5 576.7 153.2 580.0 150.9 583.0 C148.6 586.0 146.0 588.8 145.0 590.0" fill="none" stroke="#cccccc" stroke-width="8" stroke-linecap="round"/><path d="M98.5 588.4 C101.6 589.3 111.9 591.6 117.3 593.8 C122.7 596.0 126.7 601.8 130.7 601.8 C134.7 601.8 138.3 595.6 141.5 593.8 C144.7 592.0 148.2 591.5 149.6 591.0" fill="none" stroke="#cccccc" stroke-width="8" stroke-linecap="round"/><path d="M130.7 601.8 C130.9 606.7 131.1 622.9 132.0 631.4 C132.9 639.9 133.6 646.3 136.1 653.0 C138.6 659.7 143.3 665.5 146.9 671.8 C150.5 678.1 155.8 687.5 157.6 690.6" fill="none" stroke="#cccccc" stroke-width="8" stroke-linecap="round"/><path d="M103.8 623.3 C107.0 623.8 119.5 625.5 122.7 626.0" fill="none" stroke="#cccccc" stroke-width="8" stroke-linecap="round"/><path d="M116.0 642.0 C117.1 641.1 121.6 637.7 122.7 636.8" fill="none" stroke="#cccccc" stroke-width="8" stroke-linecap="round"/><path d="M145.5 631.4 C146.6 629.6 151.2 622.5 152.3 620.7" fill="none" stroke="#cccccc" stroke-width="8" stroke-linecap="round"/><path d="M126.7 661.0 C127.6 662.3 131.1 667.7 132.0 669.0" fill="none" stroke="#cccccc" stroke-width="8" stroke-linecap="round"/><path d="M138.8 604.5 C140.6 605.0 147.8 606.8 149.6 607.2" fill="none" stroke="#cccccc" stroke-width="8" stroke-linecap="round"/><path d="M205.8 513.0 C207.6 513.0 212.9 513.2 216.5 513.0 C220.1 512.8 223.3 509.4 227.3 511.7 C231.3 514.0 238.5 524.0 240.7 526.5" fill="none" stroke="#cccccc" stroke-width="8" stroke-linecap="round"/><path d="M223.2 494.2 C223.4 496.9 224.4 507.7 224.6 510.4" fill="none" stroke="#cccccc" stroke-width="8" stroke-linecap="round"/><path d="M216.5 513.0 C215.6 516.1 213.8 526.5 211.1 531.9 C208.4 537.3 202.6 540.4 200.4 545.3 C198.2 550.2 196.8 556.1 197.7 561.5 C198.6 566.9 203.1 573.6 205.8 577.6 C208.5 581.6 211.1 583.5 213.8 585.7 C216.5 587.9 219.2 588.3 221.9 591.0 C224.6 593.7 227.8 598.6 230.0 601.8 C232.2 604.9 232.7 610.3 235.4 609.9 C238.1 609.5 241.6 602.7 246.1 599.1 C250.6 595.5 259.6 590.2 262.3 588.4" fill="none" stroke="#cccccc" stroke-width="8" stroke-linecap="round"/><path d="M211.1 531.9 C212.9 534.6 219.2 543.1 221.9 548.0 C224.6 552.9 226.6 555.7 227.3 561.5 C228.0 567.3 226.1 579.4 225.9 583.0" fill="none" stroke="#cccccc" stroke-width="8" stroke-linecap="round"/><path d="M235.4 609.9 C234.9 613.5 234.5 623.3 232.7 631.4 C230.9 639.5 228.2 650.2 224.6 658.3 C221.0 666.4 214.7 674.4 211.1 679.8 C207.5 685.2 204.3 688.8 203.0 690.6" fill="none" stroke="#cccccc" stroke-width="8" stroke-linecap="round"/><path d="M238.1 609.9 C239.0 614.4 240.3 633.2 243.4 636.8 C246.5 640.4 254.6 632.3 256.9 631.4" fill="none" stroke="#cccccc" stroke-width="8" stroke-linecap="round"/><path d="M235.4 599.1 C238.5 595.5 251.1 581.2 254.2 577.6" fill="none" stroke="#cccccc" stroke-width="8" stroke-linecap="round"/><path d="M200.0 605.0 C202.7 605.8 213.3 609.2 216.0 610.0" fill="none" stroke="#cccccc" stroke-width="8" stroke-linecap="round"/><path d="M208.5 620.7 C209.4 622.5 212.9 629.6 213.8 631.4" fill="none" stroke="#cccccc" stroke-width="8" stroke-linecap="round"/><path d="M227.0 664.0 C228.3 664.8 233.7 668.2 235.0 669.0" fill="none" stroke="#cccccc" stroke-width="8" stroke-linecap="round"/><path d="M176.0 563.0 C176.3 565.0 178.0 571.3 178.0 575.0 C178.0 578.7 176.3 583.3 176.0 585.0" fill="none" stroke="#cccccc" stroke-width="8" stroke-linecap="round"/><path d="M185.0 568.0 C185.2 570.3 185.8 579.7 186.0 582.0" fill="none" stroke="#cccccc" stroke-width="8" stroke-linecap="round"/><path d="M193.0 563.0 C192.5 565.8 190.5 577.2 190.0 580.0" fill="none" stroke="#cccccc" stroke-width="8" stroke-linecap="round"/><path d="M170.0 590.0 C169.3 591.7 167.7 597.7 166.0 600.0 C164.3 602.3 161.0 603.3 160.0 604.0" fill="none" stroke="#cccccc" stroke-width="8" stroke-linecap="round"/><path d="M196.0 592.0 C196.7 594.0 199.3 602.0 200.0 604.0" fill="none" stroke="#cccccc" stroke-width="8" stroke-linecap="round"/><path d="M206.0 598.0 C207.0 598.3 211.0 599.7 212.0 600.0" fill="none" stroke="#cccccc" stroke-width="8" stroke-linecap="round"/><path d="M212.0 605.0 C213.7 605.2 220.3 605.8 222.0 606.0" fill="none" stroke="#cccccc" stroke-width="8" stroke-linecap="round"/><path d="M208.0 625.0 C209.0 626.7 213.0 633.3 214.0 635.0" fill="none" stroke="#cccccc" stroke-width="8" stroke-linecap="round"/><path d="M154.0 607.0 C155.0 607.0 159.0 607.0 160.0 607.0" fill="none" stroke="#cccccc" stroke-width="8" stroke-linecap="round"/><path d="M182.0 556.0 C182.0 556.7 182.0 559.3 182.0 560.0" fill="none" stroke="#cccccc" stroke-width="8" stroke-linecap="round"/><path d="M160.0 522.0 C163.3 523.0 173.3 528.0 180.0 528.0 C186.7 528.0 196.7 523.0 200.0 522.0" fill="none" stroke="#ffffff" stroke-width="10" stroke-linecap="round"/><path d="M148.0 532.0 C146.8 534.7 142.7 542.5 141.0 548.0 C139.3 553.5 138.2 558.8 138.0 565.0 C137.8 571.2 139.7 581.7 140.0 585.0" fill="none" stroke="#ffffff" stroke-width="9" stroke-linecap="round"/><path d="M148.0 532.0 C150.0 534.7 157.2 543.3 160.0 548.0 C162.8 552.7 165.8 554.7 165.0 560.0 C164.2 565.3 156.7 576.7 155.0 580.0" fill="none" stroke="#ffffff" stroke-width="8" stroke-linecap="round"/><path d="M211.0 532.0 C209.2 534.7 202.2 542.5 200.0 548.0 C197.8 553.5 197.0 559.7 198.0 565.0 C199.0 570.3 202.0 575.5 206.0 580.0 C210.0 584.5 219.3 590.0 222.0 592.0" fill="none" stroke="#ffffff" stroke-width="9" stroke-linecap="round"/><path d="M211.0 532.0 C212.8 535.0 219.5 543.7 222.0 550.0 C224.5 556.3 225.3 566.7 226.0 570.0" fill="none" stroke="#ffffff" stroke-width="7" stroke-linecap="round"/><path d="M100.0 589.0 C102.8 589.8 111.8 591.8 117.0 594.0 C122.2 596.2 128.5 595.8 131.0 602.0 C133.5 608.2 131.0 622.5 132.0 631.0 C133.0 639.5 134.5 646.2 137.0 653.0 C139.5 659.8 143.5 665.8 147.0 672.0 C150.5 678.2 156.2 687.0 158.0 690.0" fill="none" stroke="#ffffff" stroke-width="8" stroke-linecap="round"/><path d="M262.0 588.0 C259.3 589.8 250.5 595.3 246.0 599.0 C241.5 602.7 237.2 604.7 235.0 610.0 C232.8 615.3 234.7 623.0 233.0 631.0 C231.3 639.0 228.7 649.8 225.0 658.0 C221.3 666.2 214.7 674.7 211.0 680.0 C207.3 685.3 204.3 688.3 203.0 690.0" fill="none" stroke="#ffffff" stroke-width="8" stroke-linecap="round"/><path d="M123.0 517.0 C126.7 516.5 141.3 514.5 145.0 514.0" fill="none" stroke="#ffffff" stroke-width="6" stroke-linecap="round"/><path d="M206.0 513.0 C211.7 515.2 234.3 523.8 240.0 526.0" fill="none" stroke="#ffffff" stroke-width="6" stroke-linecap="round"/><path d="M157.0 500.0 C158.0 497.2 162.0 485.8 163.0 483.0" fill="none" stroke="#ffffff" stroke-width="6" stroke-linecap="round"/><path d="M206.0 497.0 C205.0 494.7 201.0 485.3 200.0 483.0" fill="none" stroke="#ffffff" stroke-width="6" stroke-linecap="round"/><path d="M165.0 520.0 C168.0 521.7 177.5 530.0 183.0 530.0 C188.5 530.0 195.5 521.7 198.0 520.0" fill="none" stroke="#ffffff" stroke-width="6" stroke-linecap="round"/><path d="M150.0 622.0 C154.2 621.2 166.7 616.8 175.0 617.0 C183.3 617.2 191.7 623.0 200.0 623.0 C208.3 623.0 216.7 617.2 225.0 617.0 C233.3 616.8 245.8 621.2 250.0 622.0" fill="none" stroke="#b0b0b0" stroke-width="6" stroke-linecap="round"/></g><path d="M163.0 483.5 C161.7 486.2 156.1 494.7 155.0 499.6 C153.9 504.5 154.5 509.6 156.3 513.0 C158.1 516.4 160.5 518.4 165.7 519.8 C170.8 521.1 182.3 521.6 187.2 521.1 C192.1 520.6 192.1 518.8 195.0 517.0 C197.9 515.2 202.6 513.8 204.4 510.4 C206.2 507.0 206.5 501.4 205.8 496.9 C205.1 492.4 201.3 485.7 200.4 483.5" fill="none" stroke="#00c400" stroke-width="2.2" stroke-linejoin="round"/><path d="M122.7 517.0 C124.9 516.3 132.4 513.4 136.0 513.0 C139.6 512.6 141.0 514.4 144.2 514.4 C147.4 514.4 153.2 513.2 155.0 513.0" fill="none" stroke="#00c400" stroke-width="2.2" stroke-linejoin="round"/><path d="M137.5 497.0 C137.2 499.7 136.2 510.3 136.0 513.0" fill="none" stroke="#00c400" stroke-width="2.2" stroke-linejoin="round"/><path d="M145.5 514.4 C145.9 517.3 148.9 526.8 148.2 531.9 C147.5 537.0 143.3 540.4 141.5 545.3 C139.7 550.2 137.9 554.8 137.5 561.5 C137.1 568.2 138.6 581.7 138.8 585.7" fill="none" stroke="#00c400" stroke-width="2.2" stroke-linejoin="round"/><path d="M148.2 531.9 C149.8 533.2 154.7 536.0 157.6 540.0 C160.5 544.0 165.5 550.7 165.7 556.1 C165.9 561.5 161.5 567.7 159.0 572.2 C156.5 576.7 153.2 580.0 150.9 583.0 C148.6 586.0 146.0 588.8 145.0 590.0" fill="none" stroke="#00c400" stroke-width="2.2" stroke-linejoin="round"/><path d="M98.5 588.4 C101.6 589.3 111.9 591.6 117.3 593.8 C122.7 596.0 126.7 601.8 130.7 601.8 C134.7 601.8 138.3 595.6 141.5 593.8 C144.7 592.0 148.2 591.5 149.6 591.0" fill="none" stroke="#00c400" stroke-width="2.2" stroke-linejoin="round"/><path d="M130.7 601.8 C130.9 606.7 131.1 622.9 132.0 631.4 C132.9 639.9 133.6 646.3 136.1 653.0 C138.6 659.7 143.3 665.5 146.9 671.8 C150.5 678.1 155.8 687.5 157.6 690.6" fill="none" stroke="#00c400" stroke-width="2.2" stroke-linejoin="round"/><path d="M103.8 623.3 C107.0 623.8 119.5 625.5 122.7 626.0" fill="none" stroke="#00c400" stroke-width="2.2" stroke-linejoin="round"/><path d="M116.0 642.0 C117.1 641.1 121.6 637.7 122.7 636.8" fill="none" stroke="#00c400" stroke-width="2.2" stroke-linejoin="round"/><path d="M145.5 631.4 C146.6 629.6 151.2 622.5 152.3 620.7" fill="none" stroke="#00c400" stroke-width="2.2" stroke-linejoin="round"/><path d="M126.7 661.0 C127.6 662.3 131.1 667.7 132.0 669.0" fill="none" stroke="#00c400" stroke-width="2.2" stroke-linejoin="round"/><path d="M138.8 604.5 C140.6 605.0 147.8 606.8 149.6 607.2" fill="none" stroke="#00c400" stroke-width="2.2" stroke-linejoin="round"/><path d="M205.8 513.0 C207.6 513.0 212.9 513.2 216.5 513.0 C220.1 512.8 223.3 509.4 227.3 511.7 C231.3 514.0 238.5 524.0 240.7 526.5" fill="none" stroke="#00c400" stroke-width="2.2" stroke-linejoin="round"/><path d="M223.2 494.2 C223.4 496.9 224.4 507.7 224.6 510.4" fill="none" stroke="#00c400" stroke-width="2.2" stroke-linejoin="round"/><path d="M216.5 513.0 C215.6 516.1 213.8 526.5 211.1 531.9 C208.4 537.3 202.6 540.4 200.4 545.3 C198.2 550.2 196.8 556.1 197.7 561.5 C198.6 566.9 203.1 573.6 205.8 577.6 C208.5 581.6 211.1 583.5 213.8 585.7 C216.5 587.9 219.2 588.3 221.9 591.0 C224.6 593.7 227.8 598.6 230.0 601.8 C232.2 604.9 232.7 610.3 235.4 609.9 C238.1 609.5 241.6 602.7 246.1 599.1 C250.6 595.5 259.6 590.2 262.3 588.4" fill="none" stroke="#00c400" stroke-width="2.2" stroke-linejoin="round"/><path d="M211.1 531.9 C212.9 534.6 219.2 543.1 221.9 548.0 C224.6 552.9 226.6 555.7 227.3 561.5 C228.0 567.3 226.1 579.4 225.9 583.0" fill="none" stroke="#00c400" stroke-width="2.2" stroke-linejoin="round"/><path d="M235.4 609.9 C234.9 613.5 234.5 623.3 232.7 631.4 C230.9 639.5 228.2 650.2 224.6 658.3 C221.0 666.4 214.7 674.4 211.1 679.8 C207.5 685.2 204.3 688.8 203.0 690.6" fill="none" stroke="#00c400" stroke-width="2.2" stroke-linejoin="round"/><path d="M238.1 609.9 C239.0 614.4 240.3 633.2 243.4 636.8 C246.5 640.4 254.6 632.3 256.9 631.4" fill="none" stroke="#00c400" stroke-width="2.2" stroke-linejoin="round"/><path d="M235.4 599.1 C238.5 595.5 251.1 581.2 254.2 577.6" fill="none" stroke="#00c400" stroke-width="2.2" stroke-linejoin="round"/><path d="M200.0 605.0 C202.7 605.8 213.3 609.2 216.0 610.0" fill="none" stroke="#00c400" stroke-width="2.2" stroke-linejoin="round"/><path d="M208.5 620.7 C209.4 622.5 212.9 629.6 213.8 631.4" fill="none" stroke="#00c400" stroke-width="2.2" stroke-linejoin="round"/><path d="M227.0 664.0 C228.3 664.8 233.7 668.2 235.0 669.0" fill="none" stroke="#00c400" stroke-width="2.2" stroke-linejoin="round"/><path d="M176.0 563.0 C176.3 565.0 178.0 571.3 178.0 575.0 C178.0 578.7 176.3 583.3 176.0 585.0" fill="none" stroke="#00c400" stroke-width="2.2" stroke-linejoin="round"/><path d="M185.0 568.0 C185.2 570.3 185.8 579.7 186.0 582.0" fill="none" stroke="#00c400" stroke-width="2.2" stroke-linejoin="round"/><path d="M193.0 563.0 C192.5 565.8 190.5 577.2 190.0 580.0" fill="none" stroke="#00c400" stroke-width="2.2" stroke-linejoin="round"/><path d="M170.0 590.0 C169.3 591.7 167.7 597.7 166.0 600.0 C164.3 602.3 161.0 603.3 160.0 604.0" fill="none" stroke="#00c400" stroke-width="2.2" stroke-linejoin="round"/><path d="M196.0 592.0 C196.7 594.0 199.3 602.0 200.0 604.0" fill="none" stroke="#00c400" stroke-width="2.2" stroke-linejoin="round"/><path d="M206.0 598.0 C207.0 598.3 211.0 599.7 212.0 600.0" fill="none" stroke="#00c400" stroke-width="2.2" stroke-linejoin="round"/><path d="M212.0 605.0 C213.7 605.2 220.3 605.8 222.0 606.0" fill="none" stroke="#00c400" stroke-width="2.2" stroke-linejoin="round"/><path d="M208.0 625.0 C209.0 626.7 213.0 633.3 214.0 635.0" fill="none" stroke="#00c400" stroke-width="2.2" stroke-linejoin="round"/><path d="M154.0 607.0 C155.0 607.0 159.0 607.0 160.0 607.0" fill="none" stroke="#00c400" stroke-width="2.2" stroke-linejoin="round"/><path d="M182.0 556.0 C182.0 556.7 182.0 559.3 182.0 560.0" fill="none" stroke="#00c400" stroke-width="2.2" stroke-linejoin="round"/><ellipse cx="162" cy="661" rx="3.5" ry="4.5" fill="#00c400"/><ellipse cx="110" cy="623" rx="5" ry="2" fill="#00c400"/><ellipse cx="242" cy="637" rx="2" ry="5" fill="#00c400"/></g><g style="mix-blend-mode:difference"><rect x="201" y="126" width="1" height="244" fill="#fff"/><rect x="60" y="267" width="245" height="1" fill="#fff"/></g><g style="mix-blend-mode:difference"><rect x="537" y="126" width="1" height="244" fill="#fff"/><rect x="390" y="267" width="294" height="1" fill="#fff"/></g><g style="mix-blend-mode:difference"><rect x="201" y="439" width="1" height="293" fill="#fff"/><rect x="60" y="585" width="245" height="1" fill="#fff"/></g><clipPath id="r1"><rect x="738" y="102" width="330" height="294"/></clipPath><clipPath id="r1v"><rect x="780" y="127" width="245" height="244"/></clipPath><g clip-path="url(#r1)"><rect x="738" y="102" width="330" height="294" fill="#000"/><g clip-path="url(#r1v)"><rect x="780" y="127" width="245" height="244" fill="#151515"/><g filter="url(#b5)"><ellipse cx="902" cy="290" rx="124" ry="162" fill="#262626"/></g><g filter="url(#b2)"><path d="M902.0 139.0 C921.3 139.0 943.7 140.7 960.0 150.0 C976.3 159.3 991.2 175.5 1000.0 195.0 C1008.8 214.5 1011.0 244.5 1013.0 267.0 C1015.0 289.5 1012.5 309.5 1012.0 330.0 C1011.5 350.5 1046.2 380.0 1010.0 390.0 C973.8 400.0 831.3 400.0 795.0 390.0 C758.7 380.0 792.7 350.5 792.0 330.0 C791.3 309.5 789.0 289.5 791.0 267.0 C793.0 244.5 795.2 214.5 804.0 195.0 C812.8 175.5 827.7 159.3 844.0 150.0 C860.3 140.7 882.7 139.0 902.0 139.0 Z" fill="#b4b4b4"/><path d="M812.0 380.0 C811.5 371.7 809.7 348.8 809.0 330.0 C808.3 311.2 806.3 288.2 808.0 267.0 C809.7 245.8 811.5 219.8 819.0 203.0 C826.5 186.2 839.2 174.0 853.0 166.0 C866.8 158.0 885.7 155.0 902.0 155.0 C918.3 155.0 937.2 158.0 951.0 166.0 C964.8 174.0 977.5 186.2 985.0 203.0 C992.5 219.8 994.3 245.8 996.0 267.0 C997.7 288.2 995.7 311.2 995.0 330.0 C994.3 348.8 992.5 371.7 992.0 380.0" fill="none" stroke="#363636" stroke-width="7"/><path d="M902.0 160.0 C917.0 160.0 934.0 162.2 947.0 170.0 C960.0 177.8 972.7 190.8 980.0 207.0 C987.3 223.2 989.3 249.8 991.0 267.0 C992.7 284.2 991.0 297.8 990.0 310.0 C989.0 322.2 999.7 333.3 985.0 340.0 C970.3 346.7 929.7 350.0 902.0 350.0 C874.3 350.0 833.7 346.7 819.0 340.0 C804.3 333.3 815.0 322.2 814.0 310.0 C813.0 297.8 811.3 284.2 813.0 267.0 C814.7 249.8 816.7 223.2 824.0 207.0 C831.3 190.8 844.0 177.8 857.0 170.0 C870.0 162.2 887.0 160.0 902.0 160.0 Z" fill="#b8b8b8"/><path d="M817 290 L815 380 L989 380 L987 290 Z" fill="#ababab"/></g><g filter="url(#b5)"><ellipse cx="902" cy="245" rx="78" ry="70" fill="#eeeeee"/><ellipse cx="850" cy="300" rx="28" ry="16" fill="#d0d0d0"/><ellipse cx="954" cy="300" rx="28" ry="16" fill="#d0d0d0"/><path d="M902 162 L902 232" stroke="#808080" stroke-width="4"/><path d="M878 244 C888 238 916 238 926 244" stroke="#606060" stroke-width="7" fill="none"/><path d="M820 274 L868 280 M984 274 L936 280" stroke="#8a8a8a" stroke-width="6"/><path d="M815 318 L845 335 L880 345 M990 318 L960 335 L925 345" stroke="#4a4a4a" stroke-width="10" fill="none"/><ellipse cx="902" cy="348" rx="16" ry="12" fill="#707070"/><ellipse cx="853" cy="366" rx="9" ry="6" fill="#e4e4e4"/><ellipse cx="948" cy="366" rx="9" ry="6" fill="#e4e4e4"/></g><g filter="url(#b3)"><path d="M784 127 L784 371 M1021 127 L1021 371" stroke="#101010" stroke-width="8"/></g></g><g transform="translate(720 0)"><path d="M170.0 181.0 C167.8 184.2 159.4 193.7 156.7 200.0 C154.0 206.3 153.4 213.9 154.0 219.0 C154.6 224.1 157.2 227.4 160.5 230.4 C163.8 233.4 169.0 235.5 173.7 237.0 C178.4 238.5 184.3 239.9 188.8 239.4 C193.3 238.9 197.6 236.8 200.7 234.0 C203.8 231.2 206.1 226.6 207.3 222.8 C208.6 219.1 208.7 215.6 208.2 211.5 C207.7 207.4 206.6 203.3 204.4 198.3 C202.2 193.3 196.6 184.1 195.0 181.3" fill="none" stroke="#00b400" stroke-width="1.8" stroke-linejoin="round"/><path d="M139.7 192.6 C140.0 196.1 142.2 208.1 141.6 213.4 C141.0 218.8 138.6 221.7 135.9 224.7 C133.2 227.7 128.3 230.7 125.6 231.3 C122.9 231.9 121.2 231.5 119.9 228.5 C118.6 225.5 117.8 217.7 118.0 213.4 C118.2 209.2 120.5 204.7 121.0 203.0" fill="none" stroke="#00b400" stroke-width="1.8" stroke-linejoin="round"/><path d="M135.9 224.7 C138.4 224.7 148.5 224.7 151.0 224.7" fill="none" stroke="#00b400" stroke-width="1.8" stroke-linejoin="round"/><path d="M124.6 230.4 C126.5 231.5 134.0 235.9 135.9 237.0" fill="none" stroke="#00b400" stroke-width="1.8" stroke-linejoin="round"/><path d="M145.4 224.7 C145.6 227.5 146.3 237.0 146.3 241.7 C146.3 246.4 144.9 248.9 145.4 253.0 C145.9 257.1 147.3 261.2 149.2 266.2 C151.1 271.2 153.6 277.8 156.7 283.2 C159.8 288.6 165.5 293.9 168.0 298.3 C170.5 302.7 171.2 307.7 171.8 309.6" fill="none" stroke="#00b400" stroke-width="1.8" stroke-linejoin="round"/><path d="M100.0 266.2 C102.8 267.1 112.6 268.4 117.0 271.9 C121.4 275.4 125.2 283.2 126.5 287.0 C127.8 290.8 126.5 292.6 124.6 294.5 C122.7 296.4 119.0 298.6 115.2 298.3 C111.4 298.0 104.2 293.6 102.0 292.6" fill="none" stroke="#00b400" stroke-width="1.8" stroke-linejoin="round"/><path d="M126.5 287.0 C129.0 284.2 139.1 272.8 141.6 270.0" fill="none" stroke="#00b400" stroke-width="1.8" stroke-linejoin="round"/><path d="M130.3 283.2 C133.5 283.2 146.0 283.2 149.2 283.2" fill="none" stroke="#00b400" stroke-width="1.8" stroke-linejoin="round"/><path d="M130.0 302.0 C131.3 303.9 134.9 312.1 137.8 313.4 C140.7 314.7 145.7 310.2 147.3 309.6" fill="none" stroke="#00b400" stroke-width="1.8" stroke-linejoin="round"/><path d="M107.6 240.8 C109.2 239.8 115.4 236.0 117.0 235.0" fill="none" stroke="#00b400" stroke-width="1.8" stroke-linejoin="round"/><path d="M108.0 310.0 C108.7 311.3 111.3 316.7 112.0 318.0" fill="none" stroke="#00b400" stroke-width="1.8" stroke-linejoin="round"/><path d="M223.3 192.6 C223.2 195.1 222.4 203.3 222.4 207.7 C222.4 212.1 221.6 214.9 223.3 219.0 C225.0 223.1 228.3 229.5 232.7 232.3 C237.1 235.1 246.9 235.4 249.7 236.0" fill="none" stroke="#00b400" stroke-width="1.8" stroke-linejoin="round"/><path d="M249.7 221.0 C248.8 222.9 244.9 230.4 244.0 232.3" fill="none" stroke="#00b400" stroke-width="1.8" stroke-linejoin="round"/><path d="M216.0 202.0 C217.2 200.5 221.8 194.5 223.0 193.0" fill="none" stroke="#00b400" stroke-width="1.8" stroke-linejoin="round"/><path d="M209.2 224.7 C210.3 225.6 214.4 228.2 215.8 230.4 C217.2 232.6 217.4 234.5 217.6 237.9 C217.8 241.3 217.5 247.6 216.7 251.1 C215.9 254.6 213.7 255.5 212.9 258.7 C212.1 261.8 213.1 265.9 212.0 270.0 C210.9 274.1 208.5 279.1 206.3 283.2 C204.1 287.3 201.0 291.4 198.8 294.5 C196.6 297.6 194.1 300.8 193.1 302.0" fill="none" stroke="#00b400" stroke-width="1.8" stroke-linejoin="round"/><path d="M219.5 253.0 C220.1 255.5 222.0 263.7 223.3 268.1 C224.6 272.5 224.6 276.2 227.1 279.4 C229.6 282.5 235.9 283.9 238.4 287.0 C240.9 290.1 240.6 296.1 242.2 298.3 C243.8 300.5 244.7 301.0 247.8 300.2 C250.9 299.4 258.8 294.7 261.0 293.6" fill="none" stroke="#00b400" stroke-width="1.8" stroke-linejoin="round"/><path d="M213.9 284.0 C216.4 283.9 226.5 283.3 229.0 283.2" fill="none" stroke="#00b400" stroke-width="1.8" stroke-linejoin="round"/><path d="M238.4 287.0 C239.3 285.7 242.1 281.6 244.0 279.4 C245.9 277.2 246.9 275.1 249.7 273.8 C252.5 272.6 259.1 272.2 261.0 271.9" fill="none" stroke="#00b400" stroke-width="1.8" stroke-linejoin="round"/><path d="M248.0 264.0 C248.3 265.6 249.4 272.2 249.7 273.8" fill="none" stroke="#00b400" stroke-width="1.8" stroke-linejoin="round"/><path d="M212.0 308.0 C213.0 309.2 214.8 315.3 218.0 315.0 C221.2 314.7 228.8 307.5 231.0 306.0" fill="none" stroke="#00b400" stroke-width="1.8" stroke-linejoin="round"/><path d="M240.0 316.0 C241.0 314.7 245.0 309.3 246.0 308.0" fill="none" stroke="#00b400" stroke-width="1.8" stroke-linejoin="round"/><path d="M218.0 325.0 C219.7 325.3 226.3 326.7 228.0 327.0" fill="none" stroke="#00b400" stroke-width="1.8" stroke-linejoin="round"/><path d="M248.0 318.0 C249.0 317.7 253.0 316.3 254.0 316.0" fill="none" stroke="#00b400" stroke-width="1.8" stroke-linejoin="round"/><path d="M159.0 246.0 C160.2 247.5 163.7 252.3 166.0 255.0 C168.3 257.7 171.8 260.8 173.0 262.0" fill="none" stroke="#00b400" stroke-width="1.8" stroke-linejoin="round"/><path d="M162.0 258.0 C163.3 256.7 167.7 251.8 170.0 250.0 C172.3 248.2 175.0 247.5 176.0 247.0" fill="none" stroke="#00b400" stroke-width="1.8" stroke-linejoin="round"/><path d="M184.0 247.0 C185.0 248.3 188.0 252.5 190.0 255.0 C192.0 257.5 195.0 260.8 196.0 262.0" fill="none" stroke="#00b400" stroke-width="1.8" stroke-linejoin="round"/><path d="M200.0 245.0 C198.8 247.2 194.2 255.8 193.0 258.0" fill="none" stroke="#00b400" stroke-width="1.8" stroke-linejoin="round"/><path d="M177.0 268.0 C177.0 270.0 176.3 276.3 177.0 280.0 C177.7 283.7 180.3 288.3 181.0 290.0" fill="none" stroke="#00b400" stroke-width="1.8" stroke-linejoin="round"/><path d="M186.0 268.0 C186.0 270.0 186.8 276.3 186.0 280.0 C185.2 283.7 181.8 288.3 181.0 290.0" fill="none" stroke="#00b400" stroke-width="1.8" stroke-linejoin="round"/><path d="M181.0 290.0 C180.5 291.2 178.5 295.8 178.0 297.0" fill="none" stroke="#00b400" stroke-width="1.8" stroke-linejoin="round"/><path d="M165.0 276.0 C166.3 276.2 171.7 276.8 173.0 277.0" fill="none" stroke="#00b400" stroke-width="1.8" stroke-linejoin="round"/><path d="M191.0 276.0 C191.8 276.0 195.2 276.0 196.0 276.0" fill="none" stroke="#00b400" stroke-width="1.8" stroke-linejoin="round"/><path d="M168.0 285.0 C168.7 284.8 171.3 284.2 172.0 284.0" fill="none" stroke="#00b400" stroke-width="1.8" stroke-linejoin="round"/><path d="M196.0 230.0 C196.5 231.0 198.5 235.0 199.0 236.0" fill="none" stroke="#00b400" stroke-width="1.8" stroke-linejoin="round"/><path d="M170.0 226.0 C170.3 227.0 171.7 231.0 172.0 232.0" fill="none" stroke="#00b400" stroke-width="1.8" stroke-linejoin="round"/><ellipse cx="165" cy="257" rx="3.5" ry="3" fill="#00b400"/><ellipse cx="181" cy="311" rx="6" ry="3.5" fill="#00b400"/><ellipse cx="199" cy="252" rx="1.5" ry="4" fill="#00b400"/><ellipse cx="140" cy="214" rx="2" ry="4" fill="#00b400"/><ellipse cx="248" cy="230" rx="2" ry="3" fill="#00b400"/><ellipse cx="247" cy="300" rx="3" ry="2" fill="#00b400"/><ellipse cx="182" cy="287" rx="2.5" ry="2.5" fill="#00b400"/></g></g><clipPath id="r2"><rect x="1092" y="102" width="329" height="294"/></clipPath><clipPath id="r2v"><rect x="1109" y="127" width="294" height="244"/></clipPath><g clip-path="url(#r2)"><rect x="1092" y="102" width="329" height="294" fill="#000"/><g clip-path="url(#r2v)"><rect x="1109" y="127" width="294" height="244" fill="#151515"/><g filter="url(#b5)"><ellipse cx="1262" cy="290" rx="150" ry="160" fill="#262626"/></g><g filter="url(#b2)"><path d="M1257.0 143.0 C1280.3 143.0 1309.5 147.7 1330.0 158.0 C1350.5 168.3 1369.7 186.7 1380.0 205.0 C1390.3 223.3 1389.3 248.8 1392.0 268.0 C1394.7 287.2 1393.8 307.2 1396.0 320.0 C1398.2 332.8 1402.7 333.3 1405.0 345.0 C1407.3 356.7 1458.8 382.5 1410.0 390.0 C1361.2 397.5 1160.3 401.7 1112.0 390.0 C1063.7 378.3 1118.0 340.3 1120.0 320.0 C1122.0 299.7 1120.7 287.2 1124.0 268.0 C1127.3 248.8 1129.0 223.3 1140.0 205.0 C1151.0 186.7 1170.5 168.3 1190.0 158.0 C1209.5 147.7 1233.7 143.0 1257.0 143.0 Z" fill="#b0b0b0"/><path d="M1134.0 380.0 C1133.5 370.0 1131.3 338.7 1131.0 320.0 C1130.7 301.3 1129.3 286.3 1132.0 268.0 C1134.7 249.7 1136.7 227.0 1147.0 210.0 C1157.3 193.0 1175.7 175.8 1194.0 166.0 C1212.3 156.2 1235.0 151.0 1257.0 151.0 C1279.0 151.0 1306.7 156.2 1326.0 166.0 C1345.3 175.8 1363.2 193.0 1373.0 210.0 C1382.8 227.0 1383.5 252.2 1385.0 268.0 C1386.5 283.8 1382.5 298.8 1382.0 305.0" fill="none" stroke="#383838" stroke-width="6"/><path d="M1257.0 157.0 C1277.7 157.0 1304.0 162.5 1322.0 172.0 C1340.0 181.5 1355.8 199.0 1365.0 214.0 C1374.2 229.0 1375.8 247.7 1377.0 262.0 C1378.2 276.3 1379.8 290.7 1372.0 300.0 C1364.2 309.3 1347.0 311.3 1330.0 318.0 C1313.0 324.7 1285.0 331.7 1270.0 340.0 C1255.0 348.3 1256.7 366.3 1240.0 368.0 C1223.3 369.7 1186.2 358.0 1170.0 350.0 C1153.8 342.0 1148.2 333.7 1143.0 320.0 C1137.8 306.3 1137.2 285.7 1139.0 268.0 C1140.8 250.3 1144.2 230.0 1154.0 214.0 C1163.8 198.0 1180.8 181.5 1198.0 172.0 C1215.2 162.5 1236.3 157.0 1257.0 157.0 Z" fill="#b8b8b8"/><path d="M1140 300 L1380 300 L1400 380 L1136 380 Z" fill="#a8a8a8"/></g><g filter="url(#b5)"><ellipse cx="1265" cy="235" rx="95" ry="62" fill="#f0f0f0"/><ellipse cx="1205" cy="318" rx="40" ry="28" fill="#d8d8d8"/><path d="M1230 255 C1260 237 1310 242 1328 268" stroke="#7a7a7a" stroke-width="7" fill="none"/><path d="M1155 300 C1175 345 1220 368 1255 358" stroke="#707070" stroke-width="7" fill="none"/><path d="M1378 258 C1376 285 1368 302 1352 310 C1340 314 1325 313 1310 312" stroke="#4a4a4a" stroke-width="9" fill="none"/><ellipse cx="1388" cy="352" rx="16" ry="32" fill="#2c2c2c"/><ellipse cx="1327" cy="356" rx="20" ry="22" fill="#333"/><ellipse cx="1297" cy="340" rx="10" ry="12" fill="#444"/><ellipse cx="1350" cy="332" rx="8" ry="13" fill="#d4d4d4"/><path d="M1398 250 L1400 371" stroke="#1a1a1a" stroke-width="8"/></g><g filter="url(#b3)"><path d="M1113 127 L1113 371" stroke="#101010" stroke-width="8"/></g></g><g transform="translate(720 0)"><path d="M559.8 227.0 C556.5 227.3 546.6 227.8 540.0 229.0 C533.4 230.2 526.0 231.8 520.0 234.0 C514.0 236.2 507.3 239.0 504.0 242.0 C500.7 245.0 499.7 248.3 500.0 252.0 C500.3 255.7 505.0 262.0 506.0 264.0" fill="none" stroke="#00b400" stroke-width="1.8" stroke-linejoin="round"/><path d="M496.0 186.0 C494.3 188.7 490.0 198.0 486.0 202.0 C482.0 206.0 473.7 206.7 472.0 210.0 C470.3 213.3 473.7 218.0 476.0 222.0 C478.3 226.0 482.7 231.5 486.0 234.0 C489.3 236.5 494.3 236.5 496.0 237.0" fill="none" stroke="#00b400" stroke-width="1.8" stroke-linejoin="round"/><path d="M508.0 182.0 C508.3 184.3 507.3 193.3 510.0 196.0 C512.7 198.7 520.8 199.0 524.0 198.0 C527.2 197.0 526.7 190.3 529.0 190.0 C531.3 189.7 534.5 194.2 538.0 196.0 C541.5 197.8 543.0 199.2 550.0 201.0 C557.0 202.8 570.7 203.2 580.0 207.0 C589.3 210.8 598.3 217.8 606.0 224.0 C613.7 230.2 621.0 237.3 626.0 244.0 C631.0 250.7 634.7 258.0 636.0 264.0 C637.3 270.0 636.0 276.0 634.0 280.0 C632.0 284.0 627.7 286.5 624.0 288.0 C620.3 289.5 614.8 290.0 612.0 289.0 C609.2 288.0 607.7 286.2 607.0 282.0 C606.3 277.8 609.2 269.3 608.0 264.0 C606.8 258.7 603.7 254.3 600.0 250.0 C596.3 245.7 592.0 241.8 586.0 238.0 C580.0 234.2 571.7 228.5 564.0 227.0 C556.3 225.5 544.0 228.7 540.0 229.0" fill="none" stroke="#00b400" stroke-width="1.8" stroke-linejoin="round"/><path d="M448.0 228.0 C448.2 231.3 450.3 243.7 449.0 248.0 C447.7 252.3 442.5 251.3 440.0 254.0 C437.5 256.7 434.7 260.7 434.0 264.0 C433.3 267.3 433.7 270.7 436.0 274.0 C438.3 277.3 446.0 282.3 448.0 284.0" fill="none" stroke="#00b400" stroke-width="1.8" stroke-linejoin="round"/><path d="M456.0 250.0 C457.7 250.3 464.3 251.7 466.0 252.0" fill="none" stroke="#00b400" stroke-width="1.8" stroke-linejoin="round"/><path d="M438.0 244.0 C438.3 245.7 439.7 252.3 440.0 254.0" fill="none" stroke="#00b400" stroke-width="1.8" stroke-linejoin="round"/><path d="M436.0 274.0 C440.7 273.7 459.3 272.3 464.0 272.0" fill="none" stroke="#00b400" stroke-width="1.8" stroke-linejoin="round"/><path d="M500.0 216.0 C503.0 217.7 515.0 224.3 518.0 226.0" fill="none" stroke="#00b400" stroke-width="1.8" stroke-linejoin="round"/><path d="M514.0 260.0 C516.7 258.5 525.7 253.3 530.0 251.0 C534.3 248.7 537.0 246.3 540.0 246.0 C543.0 245.7 546.7 248.5 548.0 249.0" fill="none" stroke="#00b400" stroke-width="1.8" stroke-linejoin="round"/><path d="M518.0 274.0 C519.7 274.3 526.0 273.3 528.0 276.0 C530.0 278.7 528.3 287.7 530.0 290.0 C531.7 292.3 534.7 292.0 538.0 290.0 C541.3 288.0 547.3 282.3 550.0 278.0 C552.7 273.7 551.3 267.2 554.0 264.0 C556.7 260.8 562.3 258.3 566.0 259.0 C569.7 259.7 573.0 263.5 576.0 268.0 C579.0 272.5 582.7 283.0 584.0 286.0" fill="none" stroke="#00b400" stroke-width="1.8" stroke-linejoin="round"/><path d="M454.0 322.0 C458.3 322.3 473.3 322.7 480.0 324.0 C486.7 325.3 491.7 329.0 494.0 330.0" fill="none" stroke="#00b400" stroke-width="1.8" stroke-linejoin="round"/><path d="M456.0 310.0 C459.0 310.7 470.3 314.0 474.0 314.0 C477.7 314.0 475.3 310.7 478.0 310.0 C480.7 309.3 486.3 309.0 490.0 310.0 C493.7 311.0 498.3 315.0 500.0 316.0" fill="none" stroke="#00b400" stroke-width="1.8" stroke-linejoin="round"/><path d="M466.0 304.0 C467.7 307.0 474.3 319.0 476.0 322.0" fill="none" stroke="#00b400" stroke-width="1.8" stroke-linejoin="round"/><path d="M442.0 298.0 C443.7 303.3 450.3 324.7 452.0 330.0" fill="none" stroke="#00b400" stroke-width="1.8" stroke-linejoin="round"/><path d="M552.0 288.0 C554.7 287.3 565.3 284.7 568.0 284.0" fill="none" stroke="#00b400" stroke-width="1.8" stroke-linejoin="round"/><path d="M570.0 296.0 C573.3 294.8 586.7 290.2 590.0 289.0" fill="none" stroke="#00b400" stroke-width="1.8" stroke-linejoin="round"/><path d="M584.0 301.0 C588.3 301.0 605.7 301.0 610.0 301.0" fill="none" stroke="#00b400" stroke-width="1.8" stroke-linejoin="round"/><path d="M542.0 319.0 C546.0 317.8 558.7 314.2 566.0 312.0 C573.3 309.8 582.7 307.0 586.0 306.0" fill="none" stroke="#00b400" stroke-width="1.8" stroke-linejoin="round"/><path d="M478.0 300.0 C481.7 299.7 496.3 298.3 500.0 298.0" fill="none" stroke="#00b400" stroke-width="1.8" stroke-linejoin="round"/><ellipse cx="521" cy="316" rx="4" ry="3" fill="#00b400"/><ellipse cx="538" cy="247" rx="4" ry="3" fill="#00b400"/><ellipse cx="592" cy="225" rx="2" ry="2" fill="#00b400"/><ellipse cx="496" cy="237" rx="3" ry="2" fill="#00b400"/></g></g><clipPath id="r3"><rect x="738" y="439" width="330" height="293"/></clipPath><g clip-path="url(#r3)"><rect x="738" y="439" width="330" height="293" fill="#000"/><rect x="780" y="439" width="245" height="293" fill="#161616"/><g filter="url(#b5)"><ellipse cx="902.5" cy="585" rx="122" ry="147" fill="#262626"/></g><g filter="url(#b2)"><ellipse cx="902.5" cy="585" rx="113" ry="138" fill="#b4b4b4"/><ellipse cx="902.5" cy="585" rx="104" ry="129" fill="#383838"/><ellipse cx="902.5" cy="586" rx="98.5" ry="123" fill="#c0c0c0"/></g><g filter="url(#b5)"><ellipse cx="902" cy="590" rx="80" ry="105" fill="#ececec"/><path d="M902 472 L902 505 M902 655 L902 705" stroke="#8a8a8a" stroke-width="5"/><path d="M878 526 L900 556 L922 526 M900 556 L900 582" stroke="#6a6a6a" stroke-width="6" fill="none"/><ellipse cx="901" cy="622" rx="10" ry="30" fill="#727272"/><path d="M846 532 L842 592 M956 532 L960 592" stroke="#a4a4a4" stroke-width="9"/><path d="M856 625 C862 605 878 602 886 614 M946 625 C940 605 924 602 916 614" stroke="#8c8c8c" stroke-width="7" fill="none"/></g><g transform="translate(720 0)"><path d="M163.0 483.5 C161.7 486.2 156.1 494.7 155.0 499.6 C153.9 504.5 154.5 509.6 156.3 513.0 C158.1 516.4 160.5 518.4 165.7 519.8 C170.8 521.1 182.3 521.6 187.2 521.1 C192.1 520.6 192.1 518.8 195.0 517.0 C197.9 515.2 202.6 513.8 204.4 510.4 C206.2 507.0 206.5 501.4 205.8 496.9 C205.1 492.4 201.3 485.7 200.4 483.5" fill="none" stroke="#00b400" stroke-width="1.8" stroke-linejoin="round"/><path d="M122.7 517.0 C124.9 516.3 132.4 513.4 136.0 513.0 C139.6 512.6 141.0 514.4 144.2 514.4 C147.4 514.4 153.2 513.2 155.0 513.0" fill="none" stroke="#00b400" stroke-width="1.8" stroke-linejoin="round"/><path d="M137.5 497.0 C137.2 499.7 136.2 510.3 136.0 513.0" fill="none" stroke="#00b400" stroke-width="1.8" stroke-linejoin="round"/><path d="M145.5 514.4 C145.9 517.3 148.9 526.8 148.2 531.9 C147.5 537.0 143.3 540.4 141.5 545.3 C139.7 550.2 137.9 554.8 137.5 561.5 C137.1 568.2 138.6 581.7 138.8 585.7" fill="none" stroke="#00b400" stroke-width="1.8" stroke-linejoin="round"/><path d="M148.2 531.9 C149.8 533.2 154.7 536.0 157.6 540.0 C160.5 544.0 165.5 550.7 165.7 556.1 C165.9 561.5 161.5 567.7 159.0 572.2 C156.5 576.7 153.2 580.0 150.9 583.0 C148.6 586.0 146.0 588.8 145.0 590.0" fill="none" stroke="#00b400" stroke-width="1.8" stroke-linejoin="round"/><path d="M98.5 588.4 C101.6 589.3 111.9 591.6 117.3 593.8 C122.7 596.0 126.7 601.8 130.7 601.8 C134.7 601.8 138.3 595.6 141.5 593.8 C144.7 592.0 148.2 591.5 149.6 591.0" fill="none" stroke="#00b400" stroke-width="1.8" stroke-linejoin="round"/><path d="M130.7 601.8 C130.9 606.7 131.1 622.9 132.0 631.4 C132.9 639.9 133.6 646.3 136.1 653.0 C138.6 659.7 143.3 665.5 146.9 671.8 C150.5 678.1 155.8 687.5 157.6 690.6" fill="none" stroke="#00b400" stroke-width="1.8" stroke-linejoin="round"/><path d="M103.8 623.3 C107.0 623.8 119.5 625.5 122.7 626.0" fill="none" stroke="#00b400" stroke-width="1.8" stroke-linejoin="round"/><path d="M116.0 642.0 C117.1 641.1 121.6 637.7 122.7 636.8" fill="none" stroke="#00b400" stroke-width="1.8" stroke-linejoin="round"/><path d="M145.5 631.4 C146.6 629.6 151.2 622.5 152.3 620.7" fill="none" stroke="#00b400" stroke-width="1.8" stroke-linejoin="round"/><path d="M126.7 661.0 C127.6 662.3 131.1 667.7 132.0 669.0" fill="none" stroke="#00b400" stroke-width="1.8" stroke-linejoin="round"/><path d="M138.8 604.5 C140.6 605.0 147.8 606.8 149.6 607.2" fill="none" stroke="#00b400" stroke-width="1.8" stroke-linejoin="round"/><path d="M205.8 513.0 C207.6 513.0 212.9 513.2 216.5 513.0 C220.1 512.8 223.3 509.4 227.3 511.7 C231.3 514.0 238.5 524.0 240.7 526.5" fill="none" stroke="#00b400" stroke-width="1.8" stroke-linejoin="round"/><path d="M223.2 494.2 C223.4 496.9 224.4 507.7 224.6 510.4" fill="none" stroke="#00b400" stroke-width="1.8" stroke-linejoin="round"/><path d="M216.5 513.0 C215.6 516.1 213.8 526.5 211.1 531.9 C208.4 537.3 202.6 540.4 200.4 545.3 C198.2 550.2 196.8 556.1 197.7 561.5 C198.6 566.9 203.1 573.6 205.8 577.6 C208.5 581.6 211.1 583.5 213.8 585.7 C216.5 587.9 219.2 588.3 221.9 591.0 C224.6 593.7 227.8 598.6 230.0 601.8 C232.2 604.9 232.7 610.3 235.4 609.9 C238.1 609.5 241.6 602.7 246.1 599.1 C250.6 595.5 259.6 590.2 262.3 588.4" fill="none" stroke="#00b400" stroke-width="1.8" stroke-linejoin="round"/><path d="M211.1 531.9 C212.9 534.6 219.2 543.1 221.9 548.0 C224.6 552.9 226.6 555.7 227.3 561.5 C228.0 567.3 226.1 579.4 225.9 583.0" fill="none" stroke="#00b400" stroke-width="1.8" stroke-linejoin="round"/><path d="M235.4 609.9 C234.9 613.5 234.5 623.3 232.7 631.4 C230.9 639.5 228.2 650.2 224.6 658.3 C221.0 666.4 214.7 674.4 211.1 679.8 C207.5 685.2 204.3 688.8 203.0 690.6" fill="none" stroke="#00b400" stroke-width="1.8" stroke-linejoin="round"/><path d="M238.1 609.9 C239.0 614.4 240.3 633.2 243.4 636.8 C246.5 640.4 254.6 632.3 256.9 631.4" fill="none" stroke="#00b400" stroke-width="1.8" stroke-linejoin="round"/><path d="M235.4 599.1 C238.5 595.5 251.1 581.2 254.2 577.6" fill="none" stroke="#00b400" stroke-width="1.8" stroke-linejoin="round"/><path d="M200.0 605.0 C202.7 605.8 213.3 609.2 216.0 610.0" fill="none" stroke="#00b400" stroke-width="1.8" stroke-linejoin="round"/><path d="M208.5 620.7 C209.4 622.5 212.9 629.6 213.8 631.4" fill="none" stroke="#00b400" stroke-width="1.8" stroke-linejoin="round"/><path d="M227.0 664.0 C228.3 664.8 233.7 668.2 235.0 669.0" fill="none" stroke="#00b400" stroke-width="1.8" stroke-linejoin="round"/><path d="M176.0 563.0 C176.3 565.0 178.0 571.3 178.0 575.0 C178.0 578.7 176.3 583.3 176.0 585.0" fill="none" stroke="#00b400" stroke-width="1.8" stroke-linejoin="round"/><path d="M185.0 568.0 C185.2 570.3 185.8 579.7 186.0 582.0" fill="none" stroke="#00b400" stroke-width="1.8" stroke-linejoin="round"/><path d="M193.0 563.0 C192.5 565.8 190.5 577.2 190.0 580.0" fill="none" stroke="#00b400" stroke-width="1.8" stroke-linejoin="round"/><path d="M170.0 590.0 C169.3 591.7 167.7 597.7 166.0 600.0 C164.3 602.3 161.0 603.3 160.0 604.0" fill="none" stroke="#00b400" stroke-width="1.8" stroke-linejoin="round"/><path d="M196.0 592.0 C196.7 594.0 199.3 602.0 200.0 604.0" fill="none" stroke="#00b400" stroke-width="1.8" stroke-linejoin="round"/><path d="M206.0 598.0 C207.0 598.3 211.0 599.7 212.0 600.0" fill="none" stroke="#00b400" stroke-width="1.8" stroke-linejoin="round"/><path d="M212.0 605.0 C213.7 605.2 220.3 605.8 222.0 606.0" fill="none" stroke="#00b400" stroke-width="1.8" stroke-linejoin="round"/><path d="M208.0 625.0 C209.0 626.7 213.0 633.3 214.0 635.0" fill="none" stroke="#00b400" stroke-width="1.8" stroke-linejoin="round"/><path d="M154.0 607.0 C155.0 607.0 159.0 607.0 160.0 607.0" fill="none" stroke="#00b400" stroke-width="1.8" stroke-linejoin="round"/><path d="M182.0 556.0 C182.0 556.7 182.0 559.3 182.0 560.0" fill="none" stroke="#00b400" stroke-width="1.8" stroke-linejoin="round"/><ellipse cx="162" cy="661" rx="3.5" ry="4.5" fill="#00b400"/><ellipse cx="110" cy="623" rx="5" ry="2" fill="#00b400"/><ellipse cx="242" cy="637" rx="2" ry="5" fill="#00b400"/></g></g><g style="mix-blend-mode:difference"><rect x="921" y="127" width="1" height="244" fill="#fff"/><rect x="780" y="268" width="245" height="1" fill="#fff"/></g><g style="mix-blend-mode:difference"><rect x="1257" y="127" width="1" height="244" fill="#fff"/><rect x="1109" y="268" width="294" height="1" fill="#fff"/></g><g style="mix-blend-mode:difference"><rect x="921" y="439" width="1" height="293" fill="#fff"/><rect x="780" y="585" width="245" height="1" fill="#fff"/></g><text transform="translate(183 97) scale(0.88 1)" x="0" y="0" text-anchor="middle" font-family="Liberation Sans" font-size="14" font-weight="normal" fill="#ff6ed6" stroke="#ff6ed6" stroke-width="0.55">S</text><text transform="translate(183 409) scale(0.88 1)" x="0" y="0" text-anchor="middle" font-family="Liberation Sans" font-size="14" font-weight="normal" fill="#ff6ed6" stroke="#ff6ed6" stroke-width="0.55">I</text><text transform="translate(18 252.8) scale(0.88 1)" x="0" y="0" text-anchor="end" font-family="Liberation Sans" font-size="14" font-weight="normal" fill="#ff6ed6" stroke="#ff6ed6" stroke-width="0.55">R</text><text transform="translate(350 252.8) scale(0.88 1)" x="0" y="0" text-anchor="start" font-family="Liberation Sans" font-size="14" font-weight="normal" fill="#ff6ed6" stroke="#ff6ed6" stroke-width="0.55">L</text><text transform="translate(537 97) scale(0.88 1)" x="0" y="0" text-anchor="middle" font-family="Liberation Sans" font-size="14" font-weight="normal" fill="#ff6ed6" stroke="#ff6ed6" stroke-width="0.55">S</text><text transform="translate(537 409) scale(0.88 1)" x="0" y="0" text-anchor="middle" font-family="Liberation Sans" font-size="14" font-weight="normal" fill="#ff6ed6" stroke="#ff6ed6" stroke-width="0.55">I</text><text transform="translate(372 252.8) scale(0.88 1)" x="0" y="0" text-anchor="end" font-family="Liberation Sans" font-size="14" font-weight="normal" fill="#ff6ed6" stroke="#ff6ed6" stroke-width="0.55">P</text><text transform="translate(702.5 252.8) scale(0.88 1)" x="0" y="0" text-anchor="start" font-family="Liberation Sans" font-size="14" font-weight="normal" fill="#ff6ed6" stroke="#ff6ed6" stroke-width="0.55">A</text><text transform="translate(183 434) scale(0.88 1)" x="0" y="0" text-anchor="middle" font-family="Liberation Sans" font-size="14" font-weight="normal" fill="#ff6ed6" stroke="#ff6ed6" stroke-width="0.55">A</text><text transform="translate(183 746) scale(0.88 1)" x="0" y="0" text-anchor="middle" font-family="Liberation Sans" font-size="14" font-weight="normal" fill="#ff6ed6" stroke="#ff6ed6" stroke-width="0.55">P</text><text transform="translate(18 589.8) scale(0.88 1)" x="0" y="0" text-anchor="end" font-family="Liberation Sans" font-size="14" font-weight="normal" fill="#ff6ed6" stroke="#ff6ed6" stroke-width="0.55">R</text><text transform="translate(350 589.8) scale(0.88 1)" x="0" y="0" text-anchor="start" font-family="Liberation Sans" font-size="14" font-weight="normal" fill="#ff6ed6" stroke="#ff6ed6" stroke-width="0.55">L</text><text transform="translate(903 97) scale(0.88 1)" x="0" y="0" text-anchor="middle" font-family="Liberation Sans" font-size="14" font-weight="normal" fill="#ff6ed6" stroke="#ff6ed6" stroke-width="0.55">S</text><text transform="translate(903 409) scale(0.88 1)" x="0" y="0" text-anchor="middle" font-family="Liberation Sans" font-size="14" font-weight="normal" fill="#ff6ed6" stroke="#ff6ed6" stroke-width="0.55">I</text><text transform="translate(738 252.8) scale(0.88 1)" x="0" y="0" text-anchor="end" font-family="Liberation Sans" font-size="14" font-weight="normal" fill="#ff6ed6" stroke="#ff6ed6" stroke-width="0.55">R</text><text transform="translate(1070 252.8) scale(0.88 1)" x="0" y="0" text-anchor="start" font-family="Liberation Sans" font-size="14" font-weight="normal" fill="#ff6ed6" stroke="#ff6ed6" stroke-width="0.55">L</text><text transform="translate(1257 97) scale(0.88 1)" x="0" y="0" text-anchor="middle" font-family="Liberation Sans" font-size="14" font-weight="normal" fill="#ff6ed6" stroke="#ff6ed6" stroke-width="0.55">S</text><text transform="translate(1257 409) scale(0.88 1)" x="0" y="0" text-anchor="middle" font-family="Liberation Sans" font-size="14" font-weight="normal" fill="#ff6ed6" stroke="#ff6ed6" stroke-width="0.55">I</text><text transform="translate(1092 252.8) scale(0.88 1)" x="0" y="0" text-anchor="end" font-family="Liberation Sans" font-size="14" font-weight="normal" fill="#ff6ed6" stroke="#ff6ed6" stroke-width="0.55">P</text><text transform="translate(1422.5 252.8) scale(0.88 1)" x="0" y="0" text-anchor="start" font-family="Liberation Sans" font-size="14" font-weight="normal" fill="#ff6ed6" stroke="#ff6ed6" stroke-width="0.55">A</text><text transform="translate(903 434) scale(0.88 1)" x="0" y="0" text-anchor="middle" font-family="Liberation Sans" font-size="14" font-weight="normal" fill="#ff6ed6" stroke="#ff6ed6" stroke-width="0.55">A</text><text transform="translate(903 746) scale(0.88 1)" x="0" y="0" text-anchor="middle" font-family="Liberation Sans" font-size="14" font-weight="normal" fill="#ff6ed6" stroke="#ff6ed6" stroke-width="0.55">P</text><text transform="translate(738 589.8) scale(0.88 1)" x="0" y="0" text-anchor="end" font-family="Liberation Sans" font-size="14" font-weight="normal" fill="#ff6ed6" stroke="#ff6ed6" stroke-width="0.55">R</text><text transform="translate(1070 589.8) scale(0.88 1)" x="0" y="0" text-anchor="start" font-family="Liberation Sans" font-size="14" font-weight="normal" fill="#ff6ed6" stroke="#ff6ed6" stroke-width="0.55">L</text></svg></body></html>
